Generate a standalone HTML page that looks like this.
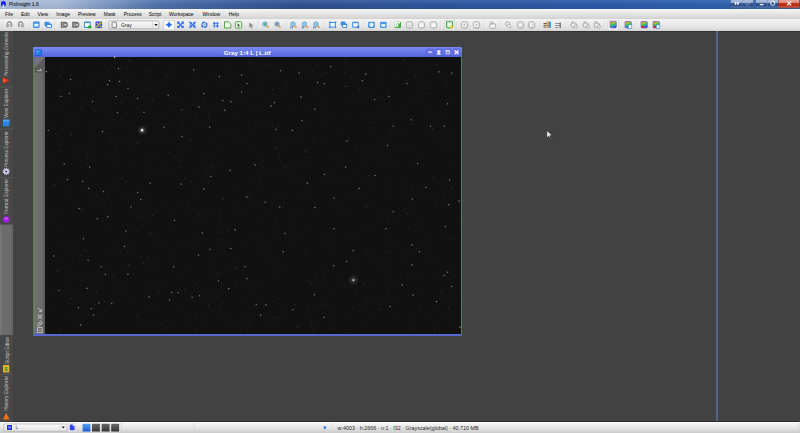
<!DOCTYPE html><html><head><meta charset="utf-8"><title>PixInsight 1.6</title><style>
*{margin:0;padding:0;box-sizing:border-box}
html,body{width:800px;height:433px;overflow:hidden;background:#424242;font-family:"Liberation Sans",sans-serif}
.a{position:absolute}
svg{position:absolute;left:0;top:0;overflow:visible}
.tx{position:absolute;white-space:nowrap;line-height:1}
</style></head><body><div class="a" style="left:0;top:0;width:800px;height:9px;background:linear-gradient(90deg,#aabcd7 0px,#a4b7d4 60px,#7893c0 110px,#4e6fa8 160px,#3b5d9c 230px,#304f8f 300px,#2f5396 360px,#2c559e 450px,#2b58a6 600px,#2e60ab 720px,#3366b0 800px)"></div><div class="a" style="left:0;top:0;width:800px;height:9px;background:linear-gradient(rgba(255,255,255,0.10),rgba(255,255,255,0) 50%,rgba(0,0,0,0.05))"></div><div class="a" style="left:0;top:9px;width:800px;height:10px;background:linear-gradient(#f6f6f6,#e6e6e6 45%,#d6d6d6 90%,#cdcdcd)"></div><div class="a" style="left:0;top:19px;width:800px;height:12px;background:linear-gradient(#f4f4f4,#ebebeb 40%,#dfdfdf 80%,#d2d2d2)"></div><div class="a" style="left:0;top:31px;width:800px;height:390px;background:#424242"></div><div class="a" style="left:0;top:31px;width:800px;height:1px;background:#333"></div><div class="a" style="left:0;top:31px;width:13px;height:390px;background:#474747"></div><div class="a" style="left:0;top:225px;width:13px;height:110px;background:#6b6b6b"></div><div class="a" style="left:0;top:225px;width:2px;height:110px;background:#767676"></div><div class="a" style="left:11px;top:225px;width:2px;height:110px;background:#666"></div><div class="a" style="left:716px;top:31px;width:2px;height:390px;background:#56648a"></div><div class="a" style="left:0;top:421px;width:800px;height:1px;background:#2e2e2e"></div><div class="a" style="left:0;top:422px;width:800px;height:11px;background:linear-gradient(#fcfcfc,#f0f0f0 25%,#e2e2e2 60%,#cacaca)"></div><div class="tx" style="left:9px;top:2.6px;font-size:4.95px;color:#1a1e26;-webkit-text-stroke:0.1px #1a1e26">PixInsight 1.6</div><div class="tx" style="left:5px;top:12.9px;font-size:4.95px;color:#000000;">File</div><div class="tx" style="left:21px;top:12.9px;font-size:4.95px;color:#000000;">Edit</div><div class="tx" style="left:37.5px;top:12.9px;font-size:4.95px;color:#000000;">View</div><div class="tx" style="left:56.3px;top:12.9px;font-size:4.95px;color:#000000;">Image</div><div class="tx" style="left:78px;top:12.9px;font-size:4.95px;color:#000000;">Preview</div><div class="tx" style="left:103.8px;top:12.9px;font-size:4.95px;color:#000000;">Mask</div><div class="tx" style="left:123.8px;top:12.9px;font-size:4.95px;color:#000000;">Process</div><div class="tx" style="left:148.8px;top:12.9px;font-size:4.95px;color:#000000;">Script</div><div class="tx" style="left:169px;top:12.9px;font-size:4.95px;color:#000000;">Workspace</div><div class="tx" style="left:202.5px;top:12.9px;font-size:4.95px;color:#000000;">Window</div><div class="tx" style="left:228.8px;top:12.9px;font-size:4.95px;color:#000000;">Help</div><div class="tx" style="left:5.3px;top:75.7px;font-size:4.95px;color:#c0c0c0;transform-origin:0 0;transform:rotate(-90deg)">Processing Console</div><div class="tx" style="left:5.3px;top:117.8px;font-size:4.75px;color:#c0c0c0;transform-origin:0 0;transform:rotate(-90deg)">View Explorer</div><div class="tx" style="left:5.3px;top:166.5px;font-size:4.72px;color:#c0c0c0;transform-origin:0 0;transform:rotate(-90deg)">Process Explorer</div><div class="tx" style="left:5.3px;top:214px;font-size:4.92px;color:#c0c0c0;transform-origin:0 0;transform:rotate(-90deg)">Format Explorer</div><div class="tx" style="left:5.3px;top:364px;font-size:5.0px;color:#c0c0c0;transform-origin:0 0;transform:rotate(-90deg)">Script Editor</div><div class="tx" style="left:5.3px;top:411px;font-size:4.95px;color:#c0c0c0;transform-origin:0 0;transform:rotate(-90deg)">History Explorer</div><svg width="800" height="433" viewBox="0 0 800 433"><defs>
<linearGradient id="gb" x1="0" y1="0" x2="0" y2="1"><stop offset="0" stop-color="#b4c4e0"/><stop offset="0.38" stop-color="#94aad2"/><stop offset="0.48" stop-color="#3a5894"/><stop offset="0.7" stop-color="#2a4a8a"/><stop offset="1" stop-color="#6080b8"/></linearGradient>
<linearGradient id="gr" x1="0" y1="0" x2="0" y2="1"><stop offset="0" stop-color="#eaa8a0"/><stop offset="0.38" stop-color="#e08878"/><stop offset="0.48" stop-color="#c03818"/><stop offset="0.7" stop-color="#b82810"/><stop offset="1" stop-color="#e07060"/></linearGradient>
<linearGradient id="gcombo" x1="0" y1="0" x2="0" y2="1"><stop offset="0" stop-color="#fafafa"/><stop offset="1" stop-color="#e4e4e4"/></linearGradient>
<linearGradient id="grgb" x1="0.1" y1="0" x2="0.5" y2="1"><stop offset="0" stop-color="#e8403a"/><stop offset="0.3" stop-color="#a8d030"/><stop offset="0.55" stop-color="#30c850"/><stop offset="0.8" stop-color="#2a90d0"/><stop offset="1" stop-color="#2a30e0"/></linearGradient>
</defs><circle cx="3.4" cy="3.3" r="2.4" fill="#1a1ef0"/><path d="M1 3.5 Q0.9 6.2 2.4 6.6 L4.4 6.6 Q5.9 6.2 5.8 3.5 Z" fill="#1a1ef0"/><path d="M2.6 4.6 L4.2 4.6 L4.3 7.9 L2.5 7.9 Z" fill="#dfe6ff"/><rect x="730.5" y="-0.5" width="23" height="8.3" rx="1" fill="url(#gb)" stroke="#3a5a92" stroke-width="0.6"/><line x1="742" y1="0" x2="742" y2="7" stroke="#6d89b8" stroke-width="0.5"/><rect x="755.5" y="-0.5" width="44" height="8.3" rx="1" fill="url(#gb)" stroke="#3a5a92" stroke-width="0.6"/><line x1="767.2" y1="0" x2="767.2" y2="7" stroke="#6d89b8" stroke-width="0.5"/><rect x="778.5" y="-0.5" width="21" height="8.3" rx="1" fill="url(#gr)" stroke="#7a3a38" stroke-width="0.6"/><ellipse cx="735.6" cy="3.3" rx="0.9" ry="1.6" fill="#f4f4f4"/><ellipse cx="738.1" cy="3.3" rx="0.9" ry="1.6" fill="#f4f4f4"/><circle cx="747.6" cy="3.2" r="1.8" fill="none" stroke="#b8bcc8" stroke-width="1" stroke-dasharray="1 0.5"/><rect x="759.8" y="4.0" width="3.6" height="1.2" fill="#fff"/><rect x="770.8" y="1.3" width="3.8" height="3.8" rx="0.6" fill="none" stroke="#f0f0f0" stroke-width="0.9"/><path d="M771.9 2.6 h1.6 l-0.8 1 Z" fill="#333"/><path d="M787.2 1.4 L791.2 5.2 M791.2 1.4 L787.2 5.2" stroke="#f4f0f0" stroke-width="1.3"/><line x1="2" y1="21" x2="2" y2="29" stroke="#cfcfcf" stroke-width="0.6"/><path d="M7.2 27.1 V24.1 Q7.4 21.9 9.4 21.9 Q11.6 22.1 11.6 24.3 V26.7" fill="none" stroke="#8e8e8e" stroke-width="1.1"/><path d="M6 25.1 L7.2 27.3 L8.6 25.3" fill="none" stroke="#9a9a9a" stroke-width="0.8"/><rect x="8.4" y="24.3" width="2" height="2.4" fill="none" stroke="#b0b0b0" stroke-width="0.7"/><path d="M18.5 26.7 V24.3 Q18.5 21.9 20.7 21.9 Q22.9 22.1 22.9 24.1 V27.1" fill="none" stroke="#8e8e8e" stroke-width="1.1"/><path d="M21.5 25.3 L22.9 27.3 L24.1 25.1" fill="none" stroke="#9a9a9a" stroke-width="0.8"/><rect x="19.7" y="24.3" width="2" height="2.4" fill="none" stroke="#b0b0b0" stroke-width="0.7"/><line x1="30" y1="20.5" x2="30" y2="29.5" stroke="#d2d2d2" stroke-width="0.7"/><line x1="30.7" y1="20.5" x2="30.7" y2="29.5" stroke="#fafafa" stroke-width="0.5"/><rect x="33" y="21.5" width="6.6" height="6.4" rx="1" fill="#3f8fe6"/><rect x="34.2" y="23.7" width="4.2" height="2.8" fill="#e8f2ff"/><rect x="44.5" y="21.7" width="5" height="4.5" rx="1.2" fill="#3c8ee8"/><rect x="46" y="23.5" width="6" height="4.6" rx="1" fill="#3c8ee8"/><rect x="47.2" y="25.1" width="3.8" height="2" fill="#fff"/><line x1="55" y1="20.5" x2="55" y2="29.5" stroke="#d2d2d2" stroke-width="0.7"/><line x1="55.7" y1="20.5" x2="55.7" y2="29.5" stroke="#fafafa" stroke-width="0.5"/><path d="M60.8 21.8 H64.8 Q67.89999999999999 21.8 67.89999999999999 24.8 Q67.89999999999999 27.8 64.8 27.8 H60.8 Z" fill="#686868"/><rect x="62.099999999999994" y="22.8" width="1.3" height="4" fill="#a8a8a8"/><circle cx="65.39999999999999" cy="24.8" r="1.3" fill="#cfcfcf"/><path d="M72.2 21.8 H76.2 Q79.3 21.8 79.3 24.8 Q79.3 27.8 76.2 27.8 H72.2 Z" fill="#686868"/><rect x="73.5" y="22.8" width="1.3" height="4" fill="#a8a8a8"/><circle cx="76.8" cy="24.8" r="1.3" fill="#cfcfcf"/><rect x="84" y="21.5" width="6.8" height="6.4" rx="1" fill="#3a8de6"/><rect x="85" y="23.1" width="4.8" height="3.8" fill="#fff"/><circle cx="89.8" cy="26.9" r="1.7" fill="#23a82a"/><rect x="95.5" y="21.5" width="6.6" height="6.6" fill="#2450d8"/><path d="M96.3 27.3 L101.3 22.3" stroke="#f0c020" stroke-width="1.4"/><circle cx="97.4" cy="23.3" r="0.9" fill="#f0c020"/><rect x="99.8" y="25.7" width="1.6" height="1.6" fill="#f0c020"/><line x1="106" y1="20.5" x2="106" y2="29.5" stroke="#d2d2d2" stroke-width="0.7"/><line x1="106.7" y1="20.5" x2="106.7" y2="29.5" stroke="#fafafa" stroke-width="0.5"/><rect x="108.9" y="20.9" width="50" height="8" rx="0.8" fill="url(#gcombo)" stroke="#a3a3a3" stroke-width="0.7"/><line x1="152.5" y1="21.5" x2="152.5" y2="28.5" stroke="#c8c8c8" stroke-width="0.6"/><path d="M154.3 23.9 h3.4 l-1.7 2.2 Z" fill="#111"/><rect x="112" y="22.2" width="4.6" height="5.4" rx="0.6" fill="none" stroke="#7a7a7a" stroke-width="0.9"/><rect x="163.8" y="20.3" width="10.399999999999977" height="9.6" fill="#fdfdfd" stroke="#c4c4c4" stroke-width="0.6"/><path d="M169 21.6 Q169.9 23.9 172.4 24.8 Q169.9 25.7 169 28.0 Q168.1 25.7 165.6 24.8 Q168.1 23.9 169 21.6 Z" fill="#2a70e8"/><circle cx="169" cy="24.8" r="1.5" fill="#2a70e8"/><path d="M177.2 21.5 h2.8 l-0.9 0.9 l1.3 1.3 l-1 1 l-1.3 -1.3 l-0.9 0.9 Z" fill="#2a6cf0"/><path d="M183.79999999999998 21.5 h-2.8 l0.9 0.9 l-1.3 1.3 l1 1 l1.3 -1.3 l0.9 0.9 Z" fill="#2a6cf0"/><path d="M177.2 28.1 h2.8 l-0.9 -0.9 l1.3 -1.3 l-1 -1 l-1.3 1.3 l-0.9 -0.9 Z" fill="#2a6cf0"/><path d="M183.79999999999998 28.1 h-2.8 l0.9 -0.9 l-1.3 -1.3 l1 -1 l1.3 1.3 l0.9 -0.9 Z" fill="#2a6cf0"/><circle cx="180.5" cy="24.8" r="0.9" fill="#1a50c8"/><path d="M192.1 24.4 v-2.6 l-0.9 0.9 l-1.4 -1.4 l-0.9 0.9 l1.4 1.4 l-0.9 0.9 Z" fill="#2a6cf0"/><path d="M192.89999999999998 24.4 v-2.6 l0.9 0.9 l1.4 -1.4 l0.9 0.9 l-1.4 1.4 l0.9 0.9 Z" fill="#2a6cf0"/><path d="M192.1 25.2 v2.6 l-0.9 -0.9 l-1.4 1.4 l-0.9 -0.9 l1.4 -1.4 l-0.9 -0.9 Z" fill="#2a6cf0"/><path d="M192.89999999999998 25.2 v2.6 l0.9 -0.9 l1.4 1.4 l0.9 -0.9 l-1.4 -1.4 l0.9 -0.9 Z" fill="#2a6cf0"/><circle cx="192.5" cy="24.8" r="0.8" fill="#1a50c8"/><circle cx="204.4" cy="24.8" r="2.5" fill="#dfe8f8" stroke="#2a6cf0" stroke-width="1.5" stroke-dasharray="3.1 0.8" transform="rotate(22 204.4 24.8)"/><circle cx="204.4" cy="24.8" r="1" fill="#9aaccc"/><path d="M212.79999999999998 24.1 l1.6 -2.5 l1.6 2.5 h-1 v1.2 h-1.2 v-1.2 Z M215.79999999999998 25.5 l1.6 2.5 l1.6 -2.5 h-1 v-1.2 h-1.2 v1.2 Z" fill="#2a6cf0"/><path d="M212.79999999999998 25.5 l1.6 2.5 l1.6 -2.5 Z M215.79999999999998 24.1 l1.6 -2.5 l1.6 2.5 Z" fill="#2a6cf0" opacity="0.85"/><path d="M224.5 21.8 h4 l2.3 2.3 v3.9 h-6.3 Z" fill="#f4fff0" stroke="#4aa83a" stroke-width="1"/><rect x="235.3" y="21.7" width="6.4" height="6.4" rx="1" fill="#f0fff0" stroke="#4aa83a" stroke-width="1"/><path d="M237.5 22.9 L240.3 25.5 L238.8 25.8 L239.5 27.1 L238.7 27.4 L238 26.1 L237.5 27.0 Z" fill="#5a5a5a"/><path d="M249.3 22.5 L253.6 25.7 L251.5 26.0 L252.4 27.9 L251.2 28.3 L250.3 26.4 L249.3 27.8 Z" fill="#8a8a8a"/><line x1="258" y1="20.5" x2="258" y2="29.5" stroke="#d2d2d2" stroke-width="0.7"/><line x1="258.7" y1="20.5" x2="258.7" y2="29.5" stroke="#fafafa" stroke-width="0.5"/><circle cx="265" cy="24.1" r="2.3" fill="#8cc8ec" stroke="#5b8fb8" stroke-width="0.6"/><line x1="266.5" y1="25.7" x2="268.5" y2="27.7" stroke="#e8923a" stroke-width="1.4"/><circle cx="265" cy="24.1" r="0.9" fill="#2aa830"/><circle cx="277" cy="24.1" r="2.3" fill="#8cc8ec" stroke="#5b8fb8" stroke-width="0.6"/><line x1="278.5" y1="25.7" x2="280.5" y2="27.7" stroke="#e8923a" stroke-width="1.4"/><circle cx="277" cy="24.1" r="0.9" fill="#d03030"/><line x1="287" y1="20.5" x2="287" y2="29.5" stroke="#d2d2d2" stroke-width="0.7"/><line x1="287.7" y1="20.5" x2="287.7" y2="29.5" stroke="#fafafa" stroke-width="0.5"/><circle cx="293" cy="24.1" r="2.3" fill="#8cc8ec" stroke="#5b8fb8" stroke-width="0.6"/><line x1="294.5" y1="25.7" x2="296.5" y2="27.7" stroke="#e8923a" stroke-width="1.4"/><rect x="290.3" y="26.5" width="0.9" height="1.8" fill="#3060c0"/><rect x="291.8" y="26.5" width="0.9" height="1.8" fill="#3060c0"/><circle cx="304.5" cy="24.1" r="2.3" fill="#8cc8ec" stroke="#5b8fb8" stroke-width="0.6"/><line x1="306.0" y1="25.7" x2="308.0" y2="27.7" stroke="#e8923a" stroke-width="1.4"/><rect x="301.8" y="26.5" width="0.9" height="1.8" fill="#3060c0"/><rect x="303.3" y="26.5" width="0.9" height="1.8" fill="#3060c0"/><circle cx="316" cy="24.1" r="2.3" fill="#8cc8ec" stroke="#5b8fb8" stroke-width="0.6"/><line x1="317.5" y1="25.7" x2="319.5" y2="27.7" stroke="#e8923a" stroke-width="1.4"/><rect x="313.3" y="26.5" width="0.9" height="1.8" fill="#3060c0"/><rect x="314.8" y="26.5" width="0.9" height="1.8" fill="#3060c0"/><line x1="325" y1="20.5" x2="325" y2="29.5" stroke="#d2d2d2" stroke-width="0.7"/><line x1="325.7" y1="20.5" x2="325.7" y2="29.5" stroke="#fafafa" stroke-width="0.5"/><rect x="329.8" y="22.5" width="5.6" height="4.6" fill="#f0f6ff" stroke="#3a8de6" stroke-width="1"/><path d="M329 21.5 h1.6 v1 h-0.6 v0.6 h-1 Z M336.2 21.5 h-1.6 v1 h0.6 v0.6 h1 Z M329 28.1 h1.6 v-1 h-0.6 v-0.6 h-1 Z M336.2 28.1 h-1.6 v-1 h0.6 v-0.6 h1 Z" fill="#3a8de6"/><rect x="340.7" y="21.5" width="4.8" height="4.3" rx="1.3" fill="#3c8ee8"/><rect x="342" y="23.5" width="5.2" height="4.4" rx="1" fill="#3c8ee8"/><rect x="343" y="25.0" width="3.2" height="2" fill="#fff"/><rect x="352.2" y="21.7" width="6.6" height="6" rx="1" fill="#3a8de6"/><rect x="353.2" y="23.1" width="4.6" height="3.6" fill="#eef4ff"/><rect x="357.2" y="26.1" width="2" height="2" fill="#1f6fe0"/><line x1="364" y1="20.5" x2="364" y2="29.5" stroke="#d2d2d2" stroke-width="0.7"/><line x1="364.7" y1="20.5" x2="364.7" y2="29.5" stroke="#fafafa" stroke-width="0.5"/><rect x="368.2" y="21.7" width="6.6" height="6.2" rx="1.4" fill="#3c8ee8"/><circle cx="371.5" cy="24.8" r="2.2" fill="#e8eefa"/><rect x="380" y="21.7" width="6.6" height="6.2" rx="1" fill="#4595ea"/><rect x="381.3" y="24.1" width="4" height="2.6" fill="#f2f6ff"/><line x1="391" y1="20.5" x2="391" y2="29.5" stroke="#d2d2d2" stroke-width="0.7"/><line x1="391.7" y1="20.5" x2="391.7" y2="29.5" stroke="#fafafa" stroke-width="0.5"/><rect x="394.6" y="21.7" width="6.4" height="6.4" rx="1" fill="#38b038"/><path d="M395.6 27.1 V22.7 H400" stroke="#fff" stroke-width="1.6" fill="none"/><rect x="396.8" y="23.9" width="1.5" height="3" fill="#fff"/><rect x="406.9" y="22.4" width="6" height="6" rx="1.6" fill="none" stroke="#c4c4c4" stroke-width="0.8"/><rect x="406.4" y="21.8" width="6" height="6" rx="1.6" fill="#eeeeee" stroke="#a4a4a4" stroke-width="0.8"/><path d="M407.8 25.9 h1.6 l1.4 -1.6" stroke="#b0b0b0" stroke-width="0.6" fill="none"/><rect x="418.9" y="22.4" width="6" height="6" rx="1.6" fill="none" stroke="#c4c4c4" stroke-width="0.8"/><rect x="418.4" y="21.8" width="6" height="6" rx="1.6" fill="#eeeeee" stroke="#a4a4a4" stroke-width="0.8"/><rect x="419.6" y="24.5" width="3.8" height="2.2" fill="#ffffff"/><rect x="430.9" y="22.4" width="6" height="6" rx="1.6" fill="none" stroke="#c4c4c4" stroke-width="0.8"/><rect x="430.4" y="21.8" width="6" height="6" rx="1.6" fill="#eeeeee" stroke="#a4a4a4" stroke-width="0.8"/><rect x="431.6" y="24.5" width="3.8" height="2.2" fill="#ffffff"/><line x1="441" y1="20.5" x2="441" y2="29.5" stroke="#d2d2d2" stroke-width="0.7"/><line x1="441.7" y1="20.5" x2="441.7" y2="29.5" stroke="#fafafa" stroke-width="0.5"/><rect x="445" y="20.3" width="9.199999999999989" height="9.6" fill="#fdfdfd" stroke="#c4c4c4" stroke-width="0.6"/><rect x="446.6" y="21.7" width="6" height="6.2" rx="0.6" fill="#eaf7e8" stroke="#3aa83a" stroke-width="1.1"/><circle cx="451.2" cy="26.7" r="1.5" fill="#f0d020"/><line x1="457" y1="20.5" x2="457" y2="29.5" stroke="#d2d2d2" stroke-width="0.7"/><line x1="457.7" y1="20.5" x2="457.7" y2="29.5" stroke="#fafafa" stroke-width="0.5"/><rect x="461.9" y="22.4" width="6" height="6" rx="1.6" fill="none" stroke="#c4c4c4" stroke-width="0.8"/><rect x="461.4" y="21.8" width="6" height="6" rx="1.6" fill="#eeeeee" stroke="#a4a4a4" stroke-width="0.8"/><path d="M463.2 24.8 l1.6 -1.2 v2.4 Z" fill="#a8a8a8"/><rect x="473.9" y="22.4" width="6" height="6" rx="1.6" fill="none" stroke="#c4c4c4" stroke-width="0.8"/><rect x="473.4" y="21.8" width="6" height="6" rx="1.6" fill="#eeeeee" stroke="#a4a4a4" stroke-width="0.8"/><path d="M477.6 24.8 l-1.6 -1.2 v2.4 Z" fill="#a8a8a8"/><line x1="485" y1="20.5" x2="485" y2="29.5" stroke="#d2d2d2" stroke-width="0.7"/><line x1="485.7" y1="20.5" x2="485.7" y2="29.5" stroke="#fafafa" stroke-width="0.5"/><rect x="489.8" y="23.7" width="5.8" height="4.6" rx="1.6" fill="#f4f4f4" stroke="#a3a3a3" stroke-width="0.9"/><circle cx="491.5" cy="23.0" r="1.4" fill="none" stroke="#a8a8a8" stroke-width="0.8"/><line x1="500" y1="20.5" x2="500" y2="29.5" stroke="#d2d2d2" stroke-width="0.7"/><line x1="500.7" y1="20.5" x2="500.7" y2="29.5" stroke="#fafafa" stroke-width="0.5"/><circle cx="507.6" cy="23.8" r="2.1" fill="#e8e8e8" stroke="#a8a8a8" stroke-width="0.9"/><path d="M508.8 25.1 l2.2 2.8" stroke="#a0a0a0" stroke-width="1.5"/><rect x="508" y="24.7" width="2.8" height="2.4" fill="#f6f6f6" stroke="#b0b0b0" stroke-width="0.5"/><rect x="517.9" y="22.4" width="6" height="6" rx="1.6" fill="none" stroke="#c4c4c4" stroke-width="0.8"/><rect x="517.4" y="21.8" width="6" height="6" rx="1.6" fill="#eeeeee" stroke="#a4a4a4" stroke-width="0.8"/><circle cx="520.4" cy="24.8" r="1.6" fill="#fff" stroke="#c0c0c0" stroke-width="0.5"/><rect x="528.9" y="22.4" width="6" height="6" rx="1.6" fill="none" stroke="#c4c4c4" stroke-width="0.8"/><rect x="528.4" y="21.8" width="6" height="6" rx="1.6" fill="#eeeeee" stroke="#a4a4a4" stroke-width="0.8"/><rect x="529.6" y="24.1" width="2.8" height="2.6" fill="#fff" stroke="#b8b8b8" stroke-width="0.5"/><line x1="540" y1="20.5" x2="540" y2="29.5" stroke="#d2d2d2" stroke-width="0.7"/><line x1="540.7" y1="20.5" x2="540.7" y2="29.5" stroke="#fafafa" stroke-width="0.5"/><rect x="546.5" y="21.5" width="2.4" height="6.6" fill="#f39a30"/><rect x="548.6" y="21.5" width="2.4" height="6.6" rx="1" fill="#3a9ae8"/><path d="M543.5 23.5 h3 M543.5 25.3 h3 M543.5 27.1 h2.5" stroke="#222" stroke-width="0.7"/><path d="M555.2 23.5 h5.5 M555.2 25.5 h5.5 M555.2 27.5 h3" stroke="#8a8a8a" stroke-width="0.9"/><rect x="559.5" y="22.5" width="1.4" height="5.6" fill="#777"/><line x1="566" y1="20.5" x2="566" y2="29.5" stroke="#d2d2d2" stroke-width="0.7"/><line x1="566.7" y1="20.5" x2="566.7" y2="29.5" stroke="#fafafa" stroke-width="0.5"/><rect x="571.2" y="23.1" width="5" height="4" rx="0.8" fill="#f0f0f0" stroke="#a0a0a0" stroke-width="0.9"/><circle cx="575.8" cy="26.5" r="1.6" fill="#f3f3f3" stroke="#9a9a9a" stroke-width="0.8"/><rect x="571.8" y="21.5" width="2" height="1" fill="#9a9a9a"/><rect x="583.2" y="23.1" width="5" height="4" rx="0.8" fill="#f0f0f0" stroke="#a0a0a0" stroke-width="0.9"/><circle cx="587.8" cy="26.5" r="1.6" fill="#f3f3f3" stroke="#9a9a9a" stroke-width="0.8"/><rect x="583.8" y="21.5" width="2" height="1" fill="#9a9a9a"/><rect x="594.2" y="23.1" width="5" height="4" rx="0.8" fill="#f0f0f0" stroke="#a0a0a0" stroke-width="0.9"/><circle cx="598.8" cy="26.5" r="1.6" fill="#f3f3f3" stroke="#9a9a9a" stroke-width="0.8"/><rect x="594.8" y="21.5" width="2" height="1" fill="#9a9a9a"/><line x1="605" y1="20.5" x2="605" y2="29.5" stroke="#d2d2d2" stroke-width="0.7"/><line x1="605.7" y1="20.5" x2="605.7" y2="29.5" stroke="#fafafa" stroke-width="0.5"/><rect x="608" y="20.3" width="10.200000000000045" height="9.6" fill="#fdfdfd" stroke="#c4c4c4" stroke-width="0.6"/><rect x="610" y="21.5" width="6.4" height="6.4" rx="0.8" fill="url(#grgb)" stroke="#8a5ac8" stroke-width="0.7"/><rect x="625" y="21.5" width="6.4" height="6.4" rx="0.8" fill="url(#grgb)" stroke="#8a5ac8" stroke-width="0.7"/><rect x="628.4" y="24.9" width="3.4" height="3.4" fill="#fff" stroke="#3a8ae0" stroke-width="0.6"/><line x1="636" y1="20.5" x2="636" y2="29.5" stroke="#d2d2d2" stroke-width="0.7"/><line x1="636.7" y1="20.5" x2="636.7" y2="29.5" stroke="#fafafa" stroke-width="0.5"/><rect x="641" y="21.5" width="6.4" height="6.4" rx="0.8" fill="url(#grgb)" stroke="#8a5ac8" stroke-width="0.7"/><path d="M641 28.1 l1.8 -3 l1.8 3 Z" fill="#e02020"/><rect x="653" y="21.5" width="6.4" height="6.4" rx="0.8" fill="url(#grgb)" stroke="#8a5ac8" stroke-width="0.7"/><path d="M653 28.1 l1.8 -3 l1.8 3 Z" fill="#e02020"/><rect x="656.4" y="24.9" width="3.4" height="3.4" fill="#fff" stroke="#3a8ae0" stroke-width="0.6"/><line x1="0" y1="86.8" x2="13" y2="86.8" stroke="#5c5c5c" stroke-width="0.8"/><line x1="0" y1="129" x2="13" y2="129" stroke="#5c5c5c" stroke-width="0.8"/><line x1="0" y1="177.6" x2="13" y2="177.6" stroke="#5c5c5c" stroke-width="0.8"/><line x1="0" y1="224.6" x2="13" y2="224.6" stroke="#5c5c5c" stroke-width="0.8"/><line x1="0" y1="374.3" x2="13" y2="374.3" stroke="#5c5c5c" stroke-width="0.8"/><line x1="0" y1="421" x2="13" y2="421" stroke="#5c5c5c" stroke-width="0.8"/><path d="M2.9 76.9 L9.6 80.4 L3.1 83.8 Z" fill="#e8300f"/><path d="M3.2 78.5 L5.5 80.4 L3.3 82.3 Z" fill="#f89060" opacity="0.7"/><rect x="3" y="119.6" width="6.4" height="6.6" fill="#2a86e8"/><rect x="3" y="119.6" width="6.4" height="2" fill="#6ab4f4" opacity="0.6"/><circle cx="6.2" cy="171.4" r="2.6" fill="#d6d2f2"/><circle cx="6.2" cy="171.4" r="3.0" fill="none" stroke="#d6d2f2" stroke-width="1.2" stroke-dasharray="1 0.9"/><circle cx="6.2" cy="171.4" r="1" fill="#3a3850"/><circle cx="6.3" cy="219.6" r="3.3" fill="#a020e0"/><ellipse cx="6.3" cy="218.5" rx="2" ry="1.1" fill="#d080ff" opacity="0.7"/><rect x="3" y="365" width="6.3" height="7.4" rx="0.5" fill="#e8b030"/><text x="4.3" y="371.2" font-size="6" font-family="Liberation Sans" font-weight="bold" fill="#1a9a2a">$</text><path d="M6.2 413 L9.6 419.4 L2.8 419.4 Z" fill="#f07010"/></svg><div class="a" style="left:32.5px;top:47px;width:429.8px;height:288.6px;background:#5866d2;border-radius:1.5px 1.5px 0 0"></div><div class="a" style="left:32.5px;top:46.9px;width:429.8px;height:10.3px;background:linear-gradient(#7a8af2,#6878e8 50%,#5464da);border-radius:1.5px 1.5px 0 0"></div><div class="a" style="left:34.2px;top:57.2px;width:10.4px;height:277px;background:linear-gradient(90deg,#777 0,#6e6e6e 2px,#6a6a6a 8px,#5c5c5c 10.4px)"></div><div class="a" style="left:44.5px;top:57.2px;width:416px;height:277px;background:#111111"></div><div class="tx" style="left:223.8px;top:50.2px;font-size:6.2px;color:#ffffff;font-weight:bold">Gray 1:4 L | L.tif</div><svg width="800" height="433" viewBox="0 0 800 433"><defs>
<radialGradient id="gs"><stop offset="0" stop-color="#8a8a8a"/><stop offset="0.45" stop-color="#5a5a5a" stop-opacity="0.8"/><stop offset="1" stop-color="#303030" stop-opacity="0"/></radialGradient>
<radialGradient id="gstar"><stop offset="0" stop-color="#ffffff"/><stop offset="0.13" stop-color="#e8e8e8"/><stop offset="0.28" stop-color="#707070" stop-opacity="0.7"/><stop offset="0.6" stop-color="#404040" stop-opacity="0.3"/><stop offset="1" stop-color="#303030" stop-opacity="0"/></radialGradient>
<radialGradient id="gstar2"><stop offset="0" stop-color="#e8e8e8"/><stop offset="0.1" stop-color="#a8a8a8"/><stop offset="0.25" stop-color="#505050" stop-opacity="0.6"/><stop offset="0.6" stop-color="#3a3a3a" stop-opacity="0.3"/><stop offset="1" stop-color="#303030" stop-opacity="0"/></radialGradient>
<linearGradient id="gsb" x1="0" y1="0" x2="0" y2="1"><stop offset="0" stop-color="#5aa0f0"/><stop offset="1" stop-color="#1f5ad0"/></linearGradient>
<linearGradient id="gsg" x1="0" y1="0" x2="0" y2="1"><stop offset="0" stop-color="#6a6a6a"/><stop offset="1" stop-color="#353535"/></linearGradient>
</defs><rect x="35.6" y="49.6" width="5.9" height="5.9" rx="0.6" fill="#1e7ae8" stroke="#1a3a9a" stroke-width="0.4"/><path d="M36.2 50.2 h4.6 l-4.6 4.6 Z" fill="#5ab0ff" opacity="0.6"/><rect x="34.5" y="57.2" width="10" height="15.5" fill="#5a5a5a"/><path d="M34.5 57.2 h10 L34.5 68.3 Z" fill="#767676"/><path d="M37.2 70.6 h4.4 M40.8 68.8 v1.8" stroke="#d0d0d0" stroke-width="0.8"/><rect x="426.6" y="48.9" width="6.8" height="6.5" rx="0.8" fill="#6974e6" stroke="#4d58c8" stroke-width="0.5"/><rect x="435.3" y="48.9" width="6.8" height="6.5" rx="0.8" fill="#6974e6" stroke="#4d58c8" stroke-width="0.5"/><rect x="444.2" y="48.9" width="6.8" height="6.5" rx="0.8" fill="#6974e6" stroke="#4d58c8" stroke-width="0.5"/><rect x="453" y="48.9" width="6.8" height="6.5" rx="0.8" fill="#6974e6" stroke="#4d58c8" stroke-width="0.5"/><rect x="428.3" y="51.6" width="3.6" height="1" fill="#fff"/><path d="M437 50.6 h3.6 v0.8 l-1.4 1.2 l1.4 1.2 v0.8 h-3.6 v-0.8 l1.4 -1.2 l-1.4 -1.2 Z" fill="#fff"/><rect x="446" y="50.6" width="3.4" height="3.2" fill="none" stroke="#dfe2ff" stroke-width="0.7"/><rect x="446" y="50.6" width="3.4" height="0.9" fill="#fff"/><path d="M454.7 50.5 L458.6 54.2 M458.6 50.5 L454.7 54.2" stroke="#fff" stroke-width="1.1"/><path d="M37.8 307.8 l3.4 3.4 M41.6 309 v2.6 h-2.6" stroke="#c8c8c8" stroke-width="0.8" fill="none"/><path d="M37.8 314.6 l4.2 4.2 M42 314.6 l-4.2 4.2" stroke="#c8c8c8" stroke-width="0.9"/><rect x="38.4" y="315.2" width="3" height="3" fill="none" stroke="#b0b0b0" stroke-width="0.5"/><circle cx="39" cy="324.5" r="1.4" fill="none" stroke="#c8c8c8" stroke-width="0.7"/><circle cx="41" cy="322.6" r="1.4" fill="none" stroke="#c8c8c8" stroke-width="0.7"/><rect x="37.6" y="327.6" width="4.6" height="5" fill="none" stroke="#c8c8c8" stroke-width="0.8"/><line x1="37.6" y1="330" x2="42.2" y2="330" stroke="#c8c8c8" stroke-width="0.6"/><rect x="179.4" y="99.5" width="1" height="1" fill="#262626"/><rect x="75.1" y="205.4" width="1" height="1" fill="#262626"/><rect x="69.1" y="197.5" width="1" height="1" fill="#262626"/><rect x="225.0" y="77.2" width="1" height="1" fill="#262626"/><rect x="221.2" y="285.4" width="1" height="1" fill="#262626"/><rect x="137.6" y="230.5" width="1" height="1" fill="#363636"/><rect x="284.5" y="167.1" width="1" height="1" fill="#363636"/><rect x="64.3" y="294.1" width="1" height="1" fill="#262626"/><rect x="104.9" y="90.4" width="1" height="1" fill="#262626"/><rect x="383.7" y="107.7" width="1" height="1" fill="#262626"/><rect x="310.1" y="160.4" width="1" height="1" fill="#262626"/><rect x="71.1" y="74.4" width="1" height="1" fill="#262626"/><rect x="327.4" y="175.6" width="1" height="1" fill="#262626"/><rect x="288.0" y="182.6" width="1" height="1" fill="#262626"/><rect x="374.7" y="250.2" width="1" height="1" fill="#262626"/><rect x="283.4" y="202.4" width="1" height="1" fill="#363636"/><rect x="347.7" y="137.2" width="1" height="1" fill="#363636"/><rect x="94.0" y="173.0" width="1" height="1" fill="#262626"/><rect x="108.1" y="192.5" width="1" height="1" fill="#262626"/><rect x="322.3" y="268.3" width="1" height="1" fill="#262626"/><rect x="408.3" y="144.3" width="1" height="1" fill="#262626"/><rect x="291.7" y="217.5" width="1" height="1" fill="#262626"/><rect x="393.6" y="317.8" width="1" height="1" fill="#262626"/><rect x="320.6" y="74.7" width="1" height="1" fill="#262626"/><rect x="313.6" y="331.1" width="1" height="1" fill="#363636"/><rect x="163.1" y="164.1" width="1" height="1" fill="#262626"/><rect x="54.4" y="185.0" width="1" height="1" fill="#262626"/><rect x="93.6" y="74.2" width="1" height="1" fill="#262626"/><rect x="98.7" y="126.1" width="1" height="1" fill="#262626"/><rect x="406.6" y="80.2" width="1" height="1" fill="#262626"/><rect x="273.0" y="300.9" width="1" height="1" fill="#363636"/><rect x="403.6" y="134.6" width="1" height="1" fill="#262626"/><rect x="193.9" y="301.2" width="1" height="1" fill="#363636"/><rect x="107.6" y="106.5" width="1" height="1" fill="#262626"/><rect x="141.8" y="191.4" width="1" height="1" fill="#262626"/><rect x="154.0" y="59.1" width="1" height="1" fill="#262626"/><rect x="198.2" y="213.7" width="1" height="1" fill="#363636"/><rect x="331.6" y="199.8" width="1" height="1" fill="#262626"/><rect x="325.6" y="72.8" width="1" height="1" fill="#363636"/><rect x="368.7" y="298.5" width="1" height="1" fill="#262626"/><rect x="207.8" y="167.7" width="1" height="1" fill="#262626"/><rect x="308.2" y="75.1" width="1" height="1" fill="#262626"/><rect x="131.6" y="102.6" width="1" height="1" fill="#262626"/><rect x="66.8" y="58.1" width="1" height="1" fill="#262626"/><rect x="87.1" y="158.0" width="1" height="1" fill="#262626"/><rect x="407.8" y="226.9" width="1" height="1" fill="#262626"/><rect x="149.7" y="153.5" width="1" height="1" fill="#262626"/><rect x="96.0" y="291.5" width="1" height="1" fill="#363636"/><rect x="238.4" y="191.1" width="1" height="1" fill="#262626"/><rect x="87.4" y="152.2" width="1" height="1" fill="#262626"/><rect x="389.0" y="102.4" width="1" height="1" fill="#262626"/><rect x="439.7" y="203.3" width="1" height="1" fill="#262626"/><rect x="270.4" y="65.4" width="1" height="1" fill="#262626"/><rect x="451.1" y="295.4" width="1" height="1" fill="#262626"/><rect x="153.4" y="158.8" width="1" height="1" fill="#262626"/><rect x="365.4" y="204.5" width="1" height="1" fill="#262626"/><rect x="181.8" y="119.3" width="1" height="1" fill="#363636"/><rect x="453.7" y="292.5" width="1" height="1" fill="#363636"/><rect x="384.6" y="261.5" width="1" height="1" fill="#262626"/><rect x="259.8" y="155.8" width="1" height="1" fill="#262626"/><rect x="56.6" y="134.8" width="1" height="1" fill="#262626"/><rect x="332.4" y="321.0" width="1" height="1" fill="#262626"/><rect x="433.9" y="329.7" width="1" height="1" fill="#363636"/><rect x="196.3" y="118.6" width="1" height="1" fill="#262626"/><rect x="126.6" y="114.2" width="1" height="1" fill="#262626"/><rect x="418.6" y="289.1" width="1" height="1" fill="#262626"/><rect x="316.0" y="277.9" width="1" height="1" fill="#262626"/><rect x="319.1" y="308.2" width="1" height="1" fill="#262626"/><rect x="356.3" y="189.5" width="1" height="1" fill="#262626"/><rect x="372.5" y="149.4" width="1" height="1" fill="#363636"/><rect x="448.2" y="166.9" width="1" height="1" fill="#262626"/><rect x="437.9" y="257.3" width="1" height="1" fill="#262626"/><rect x="97.7" y="99.6" width="1" height="1" fill="#363636"/><rect x="379.7" y="98.2" width="1" height="1" fill="#363636"/><rect x="451.8" y="238.7" width="1" height="1" fill="#262626"/><rect x="272.7" y="94.0" width="1" height="1" fill="#262626"/><rect x="447.9" y="236.7" width="1" height="1" fill="#262626"/><rect x="432.5" y="177.3" width="1" height="1" fill="#363636"/><rect x="387.9" y="116.0" width="1" height="1" fill="#262626"/><rect x="166.6" y="124.1" width="1" height="1" fill="#262626"/><rect x="152.6" y="173.2" width="1" height="1" fill="#262626"/><rect x="422.7" y="155.3" width="1" height="1" fill="#262626"/><rect x="287.1" y="306.7" width="1" height="1" fill="#262626"/><rect x="425.9" y="196.0" width="1" height="1" fill="#262626"/><rect x="262.3" y="63.1" width="1" height="1" fill="#262626"/><rect x="121.0" y="59.1" width="1" height="1" fill="#262626"/><rect x="116.5" y="188.2" width="1" height="1" fill="#262626"/><rect x="275.9" y="147.6" width="1" height="1" fill="#262626"/><rect x="275.5" y="273.7" width="1" height="1" fill="#262626"/><rect x="277.5" y="126.3" width="1" height="1" fill="#262626"/><rect x="365.5" y="197.6" width="1" height="1" fill="#262626"/><rect x="360.4" y="308.9" width="1" height="1" fill="#262626"/><rect x="299.2" y="197.0" width="1" height="1" fill="#262626"/><rect x="332.5" y="182.4" width="1" height="1" fill="#262626"/><rect x="243.4" y="316.9" width="1" height="1" fill="#262626"/><rect x="408.8" y="317.1" width="1" height="1" fill="#262626"/><rect x="277.2" y="317.4" width="1" height="1" fill="#363636"/><rect x="101.9" y="91.4" width="1" height="1" fill="#262626"/><rect x="75.1" y="124.2" width="1" height="1" fill="#262626"/><rect x="322.8" y="273.6" width="1" height="1" fill="#363636"/><rect x="109.1" y="254.9" width="1" height="1" fill="#262626"/><rect x="104.3" y="300.8" width="1" height="1" fill="#363636"/><rect x="136.1" y="319.9" width="1" height="1" fill="#262626"/><rect x="247.2" y="330.2" width="1" height="1" fill="#363636"/><rect x="112.0" y="176.7" width="1" height="1" fill="#262626"/><rect x="185.7" y="111.8" width="1" height="1" fill="#262626"/><rect x="344.7" y="63.4" width="1" height="1" fill="#262626"/><rect x="227.8" y="63.0" width="1" height="1" fill="#262626"/><rect x="303.9" y="198.9" width="1" height="1" fill="#262626"/><rect x="453.8" y="274.8" width="1" height="1" fill="#363636"/><rect x="88.5" y="131.0" width="1" height="1" fill="#262626"/><rect x="368.3" y="132.4" width="1" height="1" fill="#262626"/><rect x="220.2" y="308.6" width="1" height="1" fill="#363636"/><rect x="152.3" y="99.1" width="1" height="1" fill="#363636"/><rect x="281.8" y="250.6" width="1" height="1" fill="#262626"/><rect x="68.9" y="247.3" width="1" height="1" fill="#262626"/><rect x="75.1" y="316.0" width="1" height="1" fill="#262626"/><rect x="377.7" y="81.0" width="1" height="1" fill="#363636"/><rect x="72.6" y="295.3" width="1" height="1" fill="#262626"/><rect x="185.7" y="210.1" width="1" height="1" fill="#363636"/><rect x="156.2" y="93.5" width="1" height="1" fill="#262626"/><rect x="144.0" y="88.1" width="1" height="1" fill="#262626"/><rect x="65.9" y="113.5" width="1" height="1" fill="#262626"/><rect x="171.6" y="266.9" width="1" height="1" fill="#262626"/><rect x="252.5" y="106.9" width="1" height="1" fill="#262626"/><rect x="52.5" y="126.9" width="1" height="1" fill="#262626"/><rect x="349.2" y="209.5" width="1" height="1" fill="#262626"/><rect x="242.0" y="315.0" width="1" height="1" fill="#262626"/><rect x="384.9" y="176.8" width="1" height="1" fill="#262626"/><rect x="391.4" y="166.1" width="1" height="1" fill="#262626"/><rect x="330.4" y="328.2" width="1" height="1" fill="#262626"/><rect x="390.4" y="252.3" width="1" height="1" fill="#262626"/><rect x="212.9" y="153.6" width="1" height="1" fill="#262626"/><rect x="98.9" y="77.4" width="1" height="1" fill="#262626"/><rect x="151.1" y="102.9" width="1" height="1" fill="#262626"/><rect x="394.1" y="297.4" width="1" height="1" fill="#262626"/><rect x="162.0" y="124.6" width="1" height="1" fill="#262626"/><rect x="235.7" y="101.3" width="1" height="1" fill="#262626"/><rect x="154.2" y="322.5" width="1" height="1" fill="#363636"/><rect x="272.0" y="125.2" width="1" height="1" fill="#363636"/><rect x="173.5" y="156.1" width="1" height="1" fill="#262626"/><rect x="203.4" y="188.5" width="1" height="1" fill="#262626"/><rect x="128.4" y="196.8" width="1" height="1" fill="#262626"/><rect x="154.6" y="82.7" width="1" height="1" fill="#262626"/><rect x="62.3" y="64.2" width="1" height="1" fill="#262626"/><rect x="141.6" y="219.0" width="1" height="1" fill="#262626"/><rect x="356.5" y="238.8" width="1" height="1" fill="#262626"/><rect x="409.8" y="165.1" width="1" height="1" fill="#262626"/><rect x="453.7" y="99.1" width="1" height="1" fill="#262626"/><rect x="311.9" y="70.0" width="1" height="1" fill="#363636"/><rect x="415.2" y="230.5" width="1" height="1" fill="#262626"/><rect x="382.1" y="96.3" width="1" height="1" fill="#262626"/><rect x="254.3" y="287.6" width="1" height="1" fill="#363636"/><rect x="388.0" y="218.6" width="1" height="1" fill="#363636"/><rect x="328.4" y="248.7" width="1" height="1" fill="#262626"/><rect x="57.9" y="94.6" width="1" height="1" fill="#262626"/><rect x="88.5" y="287.9" width="1" height="1" fill="#262626"/><rect x="305.5" y="230.2" width="1" height="1" fill="#262626"/><rect x="248.1" y="58.9" width="1" height="1" fill="#262626"/><rect x="355.5" y="196.3" width="1" height="1" fill="#262626"/><rect x="318.6" y="76.2" width="1" height="1" fill="#262626"/><rect x="149.7" y="78.5" width="1" height="1" fill="#262626"/><rect x="347.7" y="114.4" width="1" height="1" fill="#262626"/><rect x="449.9" y="193.8" width="1" height="1" fill="#262626"/><rect x="243.8" y="246.0" width="1" height="1" fill="#262626"/><rect x="301.0" y="234.8" width="1" height="1" fill="#262626"/><rect x="106.2" y="127.8" width="1" height="1" fill="#262626"/><rect x="171.3" y="214.1" width="1" height="1" fill="#262626"/><rect x="70.2" y="131.9" width="1" height="1" fill="#262626"/><rect x="332.3" y="243.8" width="1" height="1" fill="#262626"/><rect x="259.4" y="185.8" width="1" height="1" fill="#262626"/><rect x="94.2" y="303.8" width="1" height="1" fill="#262626"/><rect x="450.9" y="315.5" width="1" height="1" fill="#262626"/><rect x="235.5" y="283.5" width="1" height="1" fill="#363636"/><rect x="231.5" y="131.9" width="1" height="1" fill="#262626"/><rect x="437.4" y="115.9" width="1" height="1" fill="#262626"/><rect x="103.8" y="202.1" width="1" height="1" fill="#363636"/><rect x="100.0" y="283.6" width="1" height="1" fill="#262626"/><rect x="413.0" y="251.4" width="1" height="1" fill="#262626"/><rect x="417.5" y="191.7" width="1" height="1" fill="#262626"/><rect x="46.5" y="193.2" width="1" height="1" fill="#262626"/><rect x="170.3" y="96.7" width="1" height="1" fill="#262626"/><rect x="176.2" y="289.1" width="1" height="1" fill="#262626"/><rect x="356.6" y="288.8" width="1" height="1" fill="#262626"/><rect x="429.5" y="254.1" width="1" height="1" fill="#363636"/><rect x="165.3" y="160.4" width="1" height="1" fill="#262626"/><rect x="459.5" y="220.0" width="1" height="1" fill="#262626"/><rect x="222.6" y="133.7" width="1" height="1" fill="#262626"/><rect x="87.2" y="287.5" width="1" height="1" fill="#262626"/><rect x="433.3" y="126.6" width="1" height="1" fill="#262626"/><rect x="257.0" y="110.2" width="1" height="1" fill="#262626"/><rect x="441.8" y="301.2" width="1" height="1" fill="#363636"/><rect x="306.8" y="309.2" width="1" height="1" fill="#363636"/><rect x="272.9" y="255.9" width="1" height="1" fill="#262626"/><rect x="348.9" y="182.0" width="1" height="1" fill="#262626"/><rect x="312.5" y="136.7" width="1" height="1" fill="#262626"/><rect x="429.6" y="93.0" width="1" height="1" fill="#262626"/><rect x="187.6" y="139.9" width="1" height="1" fill="#262626"/><rect x="450.2" y="129.5" width="1" height="1" fill="#262626"/><rect x="169.8" y="211.3" width="1" height="1" fill="#262626"/><rect x="114.4" y="102.5" width="1" height="1" fill="#262626"/><rect x="421.0" y="194.7" width="1" height="1" fill="#262626"/><rect x="421.1" y="332.0" width="1" height="1" fill="#262626"/><rect x="102.9" y="110.9" width="1" height="1" fill="#262626"/><rect x="186.9" y="83.1" width="1" height="1" fill="#262626"/><rect x="152.2" y="214.6" width="1" height="1" fill="#363636"/><rect x="356.1" y="171.5" width="1" height="1" fill="#262626"/><rect x="262.5" y="161.6" width="1" height="1" fill="#262626"/><rect x="70.8" y="134.3" width="1" height="1" fill="#363636"/><rect x="97.2" y="196.4" width="1" height="1" fill="#262626"/><rect x="403.1" y="117.4" width="1" height="1" fill="#262626"/><rect x="148.1" y="167.9" width="1" height="1" fill="#262626"/><rect x="440.9" y="291.4" width="1" height="1" fill="#363636"/><rect x="54.1" y="66.9" width="1" height="1" fill="#262626"/><rect x="416.7" y="188.1" width="1" height="1" fill="#262626"/><rect x="45.1" y="165.7" width="1" height="1" fill="#363636"/><rect x="387.6" y="293.3" width="1" height="1" fill="#363636"/><rect x="148.1" y="88.0" width="1" height="1" fill="#262626"/><rect x="261.8" y="245.6" width="1" height="1" fill="#363636"/><rect x="344.5" y="236.0" width="1" height="1" fill="#262626"/><rect x="234.8" y="209.7" width="1" height="1" fill="#262626"/><rect x="369.7" y="122.0" width="1" height="1" fill="#363636"/><rect x="312.9" y="141.5" width="1" height="1" fill="#262626"/><rect x="149.5" y="233.0" width="1" height="1" fill="#262626"/><rect x="91.5" y="77.3" width="1" height="1" fill="#262626"/><rect x="286.9" y="164.7" width="1" height="1" fill="#262626"/><rect x="294.4" y="60.9" width="1" height="1" fill="#262626"/><rect x="236.2" y="321.7" width="1" height="1" fill="#262626"/><rect x="411.8" y="188.7" width="1" height="1" fill="#262626"/><rect x="147.5" y="322.2" width="1" height="1" fill="#262626"/><rect x="172.6" y="64.0" width="1" height="1" fill="#262626"/><rect x="324.9" y="173.5" width="1" height="1" fill="#262626"/><rect x="322.0" y="312.4" width="1" height="1" fill="#262626"/><rect x="59.2" y="151.0" width="1" height="1" fill="#262626"/><rect x="328.3" y="112.5" width="1" height="1" fill="#262626"/><rect x="351.7" y="196.8" width="1" height="1" fill="#262626"/><rect x="447.5" y="143.7" width="1" height="1" fill="#363636"/><rect x="140.8" y="118.9" width="1" height="1" fill="#262626"/><rect x="167.4" y="319.8" width="1" height="1" fill="#262626"/><rect x="122.7" y="119.4" width="1" height="1" fill="#262626"/><rect x="321.1" y="318.9" width="1" height="1" fill="#262626"/><rect x="208.3" y="116.6" width="1" height="1" fill="#363636"/><rect x="103.9" y="72.3" width="1" height="1" fill="#262626"/><rect x="208.2" y="305.0" width="1" height="1" fill="#363636"/><rect x="349.1" y="332.3" width="1" height="1" fill="#363636"/><rect x="181.6" y="109.0" width="1" height="1" fill="#363636"/><rect x="354.7" y="66.8" width="1" height="1" fill="#262626"/><rect x="202.1" y="160.8" width="1" height="1" fill="#262626"/><rect x="115.2" y="58.8" width="1" height="1" fill="#262626"/><rect x="190.9" y="320.8" width="1" height="1" fill="#262626"/><rect x="445.2" y="115.0" width="1" height="1" fill="#262626"/><rect x="386.0" y="284.1" width="1" height="1" fill="#262626"/><rect x="65.4" y="188.2" width="1" height="1" fill="#262626"/><rect x="426.6" y="111.1" width="1" height="1" fill="#262626"/><rect x="417.3" y="66.3" width="1" height="1" fill="#262626"/><rect x="381.9" y="268.8" width="1" height="1" fill="#262626"/><rect x="59.5" y="75.2" width="1" height="1" fill="#363636"/><rect x="151.7" y="263.5" width="1" height="1" fill="#363636"/><rect x="185.7" y="132.9" width="1" height="1" fill="#363636"/><rect x="301.0" y="130.1" width="1" height="1" fill="#262626"/><rect x="176.3" y="133.8" width="1" height="1" fill="#262626"/><rect x="358.6" y="310.0" width="1" height="1" fill="#262626"/><rect x="436.4" y="64.7" width="1" height="1" fill="#262626"/><rect x="242.2" y="321.1" width="1" height="1" fill="#363636"/><rect x="205.4" y="127.0" width="1" height="1" fill="#262626"/><rect x="249.8" y="313.2" width="1" height="1" fill="#262626"/><rect x="378.1" y="261.1" width="1" height="1" fill="#363636"/><rect x="365.7" y="225.0" width="1" height="1" fill="#262626"/><rect x="177.6" y="157.5" width="1" height="1" fill="#262626"/><rect x="77.8" y="112.3" width="1" height="1" fill="#262626"/><rect x="147.6" y="75.8" width="1" height="1" fill="#262626"/><rect x="274.3" y="147.6" width="1" height="1" fill="#363636"/><rect x="411.6" y="329.7" width="1" height="1" fill="#262626"/><rect x="79.9" y="84.5" width="1" height="1" fill="#262626"/><rect x="339.6" y="180.9" width="1" height="1" fill="#262626"/><rect x="218.0" y="228.6" width="1" height="1" fill="#262626"/><rect x="355.4" y="290.9" width="1" height="1" fill="#262626"/><rect x="95.3" y="289.2" width="1" height="1" fill="#262626"/><rect x="280.3" y="160.6" width="1" height="1" fill="#262626"/><rect x="127.7" y="126.0" width="1" height="1" fill="#262626"/><rect x="108.6" y="301.1" width="1" height="1" fill="#262626"/><rect x="180.4" y="166.9" width="1" height="1" fill="#363636"/><rect x="255.5" y="121.6" width="1" height="1" fill="#363636"/><rect x="316.1" y="330.5" width="1" height="1" fill="#262626"/><rect x="242.0" y="283.3" width="1" height="1" fill="#363636"/><rect x="424.5" y="69.1" width="1" height="1" fill="#262626"/><rect x="94.5" y="110.1" width="1" height="1" fill="#363636"/><rect x="287.0" y="313.8" width="1" height="1" fill="#262626"/><rect x="404.4" y="181.5" width="1" height="1" fill="#262626"/><rect x="367.8" y="318.1" width="1" height="1" fill="#262626"/><rect x="292.4" y="228.5" width="1" height="1" fill="#262626"/><rect x="198.0" y="96.9" width="1" height="1" fill="#262626"/><rect x="150.8" y="222.8" width="1" height="1" fill="#262626"/><rect x="129.4" y="61.1" width="1" height="1" fill="#262626"/><rect x="326.5" y="108.9" width="1" height="1" fill="#262626"/><rect x="129.4" y="276.7" width="1" height="1" fill="#262626"/><rect x="71.3" y="85.9" width="1" height="1" fill="#262626"/><rect x="273.3" y="233.8" width="1" height="1" fill="#262626"/><rect x="112.9" y="249.2" width="1" height="1" fill="#262626"/><rect x="162.6" y="142.6" width="1" height="1" fill="#363636"/><rect x="174.6" y="213.8" width="1" height="1" fill="#262626"/><rect x="217.8" y="295.7" width="1" height="1" fill="#363636"/><rect x="196.0" y="112.2" width="1" height="1" fill="#262626"/><rect x="129.5" y="59.6" width="1" height="1" fill="#363636"/><rect x="220.9" y="283.6" width="1" height="1" fill="#262626"/><rect x="411.4" y="184.7" width="1" height="1" fill="#262626"/><rect x="51.2" y="209.7" width="1" height="1" fill="#262626"/><rect x="422.6" y="82.5" width="1" height="1" fill="#262626"/><rect x="198.9" y="196.7" width="1" height="1" fill="#262626"/><rect x="162.6" y="201.3" width="1" height="1" fill="#363636"/><rect x="90.1" y="192.9" width="1" height="1" fill="#363636"/><rect x="446.3" y="112.3" width="1" height="1" fill="#262626"/><rect x="436.4" y="326.3" width="1" height="1" fill="#262626"/><rect x="67.2" y="312.7" width="1" height="1" fill="#262626"/><rect x="420.3" y="228.6" width="1" height="1" fill="#363636"/><rect x="111.5" y="274.1" width="1" height="1" fill="#262626"/><rect x="212.9" y="290.7" width="1" height="1" fill="#363636"/><rect x="120.9" y="118.0" width="1" height="1" fill="#262626"/><rect x="259.9" y="163.5" width="1" height="1" fill="#262626"/><rect x="147.5" y="257.3" width="1" height="1" fill="#363636"/><rect x="62.1" y="212.6" width="1" height="1" fill="#262626"/><rect x="60.8" y="288.5" width="1" height="1" fill="#262626"/><rect x="293.8" y="209.3" width="1" height="1" fill="#262626"/><rect x="172.1" y="173.5" width="1" height="1" fill="#262626"/><rect x="221.7" y="239.2" width="1" height="1" fill="#262626"/><rect x="226.9" y="64.4" width="1" height="1" fill="#262626"/><rect x="248.1" y="122.7" width="1" height="1" fill="#262626"/><rect x="368.7" y="184.0" width="1" height="1" fill="#262626"/><rect x="241.4" y="87.4" width="1" height="1" fill="#262626"/><rect x="223.7" y="83.2" width="1" height="1" fill="#262626"/><rect x="256.7" y="69.2" width="1" height="1" fill="#262626"/><rect x="79.1" y="259.7" width="1" height="1" fill="#262626"/><rect x="257.3" y="72.9" width="1" height="1" fill="#262626"/><rect x="201.8" y="319.5" width="1" height="1" fill="#262626"/><rect x="400.7" y="331.9" width="1" height="1" fill="#262626"/><rect x="383.2" y="111.3" width="1" height="1" fill="#363636"/><rect x="249.1" y="321.1" width="1" height="1" fill="#363636"/><rect x="113.5" y="274.8" width="1" height="1" fill="#363636"/><rect x="72.2" y="154.5" width="1" height="1" fill="#262626"/><rect x="110.9" y="304.5" width="1" height="1" fill="#262626"/><rect x="383.5" y="97.5" width="1" height="1" fill="#262626"/><rect x="426.8" y="115.3" width="1" height="1" fill="#262626"/><rect x="255.0" y="145.7" width="1" height="1" fill="#262626"/><rect x="120.6" y="102.3" width="1" height="1" fill="#363636"/><rect x="327.1" y="304.2" width="1" height="1" fill="#262626"/><rect x="370.7" y="89.6" width="1" height="1" fill="#262626"/><rect x="309.1" y="156.9" width="1" height="1" fill="#363636"/><rect x="275.4" y="217.5" width="1" height="1" fill="#363636"/><rect x="88.4" y="331.1" width="1" height="1" fill="#262626"/><rect x="208.6" y="277.4" width="1" height="1" fill="#262626"/><rect x="456.1" y="216.8" width="1" height="1" fill="#262626"/><rect x="362.3" y="179.6" width="1" height="1" fill="#262626"/><rect x="353.6" y="71.3" width="1" height="1" fill="#363636"/><rect x="150.3" y="233.8" width="1" height="1" fill="#363636"/><rect x="288.1" y="240.5" width="1" height="1" fill="#262626"/><rect x="45.7" y="67.3" width="1" height="1" fill="#262626"/><rect x="300.7" y="176.9" width="1" height="1" fill="#262626"/><rect x="416.7" y="94.3" width="1" height="1" fill="#262626"/><rect x="316.0" y="64.1" width="1" height="1" fill="#262626"/><rect x="192.3" y="87.2" width="1" height="1" fill="#262626"/><rect x="138.1" y="218.5" width="1" height="1" fill="#262626"/><rect x="129.7" y="229.6" width="1" height="1" fill="#262626"/><rect x="100.9" y="315.6" width="1" height="1" fill="#262626"/><rect x="107.0" y="84.3" width="1" height="1" fill="#262626"/><rect x="406.6" y="273.1" width="1" height="1" fill="#262626"/><rect x="154.7" y="61.2" width="1" height="1" fill="#262626"/><rect x="278.4" y="154.3" width="1" height="1" fill="#262626"/><rect x="229.2" y="315.7" width="1" height="1" fill="#262626"/><rect x="148.1" y="306.5" width="1" height="1" fill="#262626"/><rect x="265.6" y="169.6" width="1" height="1" fill="#262626"/><rect x="69.2" y="272.2" width="1" height="1" fill="#262626"/><rect x="273.6" y="316.8" width="1" height="1" fill="#262626"/><rect x="127.8" y="225.2" width="1" height="1" fill="#262626"/><rect x="311.3" y="281.7" width="1" height="1" fill="#262626"/><rect x="173.4" y="140.6" width="1" height="1" fill="#262626"/><rect x="414.1" y="273.3" width="1" height="1" fill="#262626"/><rect x="47.6" y="290.2" width="1" height="1" fill="#262626"/><rect x="238.1" y="262.0" width="1" height="1" fill="#262626"/><rect x="138.8" y="87.0" width="1" height="1" fill="#262626"/><rect x="61.1" y="150.3" width="1" height="1" fill="#262626"/><rect x="333.5" y="290.5" width="1" height="1" fill="#262626"/><rect x="155.4" y="210.3" width="1" height="1" fill="#262626"/><rect x="372.2" y="201.9" width="1" height="1" fill="#262626"/><rect x="311.4" y="323.4" width="1" height="1" fill="#262626"/><rect x="410.2" y="62.2" width="1" height="1" fill="#262626"/><rect x="143.0" y="262.6" width="1" height="1" fill="#363636"/><rect x="354.7" y="147.9" width="1" height="1" fill="#363636"/><rect x="181.3" y="123.8" width="1" height="1" fill="#363636"/><rect x="306.7" y="248.5" width="1" height="1" fill="#262626"/><rect x="451.3" y="187.1" width="1" height="1" fill="#363636"/><rect x="334.5" y="293.8" width="1" height="1" fill="#262626"/><rect x="345.7" y="214.8" width="1" height="1" fill="#262626"/><rect x="133.0" y="229.2" width="1" height="1" fill="#262626"/><rect x="423.0" y="97.8" width="1" height="1" fill="#262626"/><rect x="89.3" y="313.5" width="1" height="1" fill="#262626"/><rect x="103.9" y="65.9" width="1" height="1" fill="#262626"/><rect x="332.4" y="232.3" width="1" height="1" fill="#262626"/><rect x="350.8" y="76.1" width="1" height="1" fill="#262626"/><rect x="195.8" y="282.8" width="1" height="1" fill="#363636"/><rect x="414.9" y="76.1" width="1" height="1" fill="#363636"/><rect x="424.5" y="317.7" width="1" height="1" fill="#262626"/><rect x="130.4" y="88.8" width="1" height="1" fill="#262626"/><rect x="396.8" y="281.3" width="1" height="1" fill="#262626"/><rect x="387.4" y="231.7" width="1" height="1" fill="#262626"/><rect x="86.4" y="84.9" width="1" height="1" fill="#262626"/><rect x="130.1" y="145.8" width="1" height="1" fill="#262626"/><rect x="53.7" y="128.6" width="1" height="1" fill="#262626"/><rect x="342.0" y="159.2" width="1" height="1" fill="#262626"/><rect x="445.1" y="196.5" width="1" height="1" fill="#363636"/><rect x="301.6" y="66.5" width="1" height="1" fill="#262626"/><rect x="226.1" y="270.6" width="1" height="1" fill="#262626"/><rect x="337.4" y="205.9" width="1" height="1" fill="#262626"/><rect x="402.8" y="83.0" width="1" height="1" fill="#363636"/><rect x="115.7" y="58.4" width="1" height="1" fill="#262626"/><rect x="361.3" y="326.9" width="1" height="1" fill="#262626"/><rect x="248.7" y="193.2" width="1" height="1" fill="#262626"/><rect x="121.6" y="194.0" width="1" height="1" fill="#262626"/><rect x="390.2" y="129.7" width="1" height="1" fill="#363636"/><rect x="162.7" y="117.0" width="1" height="1" fill="#262626"/><rect x="251.8" y="88.2" width="1" height="1" fill="#262626"/><rect x="78.6" y="274.7" width="1" height="1" fill="#262626"/><rect x="371.6" y="230.7" width="1" height="1" fill="#262626"/><rect x="211.5" y="166.5" width="1" height="1" fill="#363636"/><rect x="80.8" y="302.3" width="1" height="1" fill="#262626"/><rect x="130.5" y="130.4" width="1" height="1" fill="#363636"/><rect x="253.0" y="162.3" width="1" height="1" fill="#363636"/><rect x="141.9" y="184.7" width="1" height="1" fill="#262626"/><rect x="358.1" y="265.1" width="1" height="1" fill="#262626"/><rect x="189.6" y="147.8" width="1" height="1" fill="#262626"/><rect x="394.9" y="240.1" width="1" height="1" fill="#262626"/><rect x="115.4" y="178.7" width="1" height="1" fill="#262626"/><rect x="285.4" y="92.7" width="1" height="1" fill="#262626"/><rect x="412.3" y="123.4" width="1" height="1" fill="#262626"/><rect x="170.1" y="251.4" width="1" height="1" fill="#363636"/><rect x="109.2" y="100.9" width="1" height="1" fill="#262626"/><rect x="180.5" y="201.6" width="1" height="1" fill="#262626"/><rect x="181.2" y="110.1" width="1" height="1" fill="#363636"/><rect x="347.4" y="86.0" width="1" height="1" fill="#363636"/><rect x="87.2" y="163.7" width="1" height="1" fill="#363636"/><rect x="374.9" y="259.7" width="1" height="1" fill="#262626"/><rect x="126.4" y="233.4" width="1" height="1" fill="#262626"/><rect x="130.7" y="164.8" width="1" height="1" fill="#262626"/><rect x="210.6" y="275.5" width="1" height="1" fill="#262626"/><rect x="252.7" y="231.9" width="1" height="1" fill="#262626"/><rect x="103.9" y="224.0" width="1" height="1" fill="#262626"/><rect x="352.5" y="307.7" width="1" height="1" fill="#262626"/><rect x="283.2" y="264.0" width="1" height="1" fill="#262626"/><rect x="139.9" y="256.6" width="1" height="1" fill="#363636"/><rect x="366.2" y="250.5" width="1" height="1" fill="#363636"/><rect x="327.0" y="234.4" width="1" height="1" fill="#262626"/><rect x="174.9" y="230.8" width="1" height="1" fill="#262626"/><rect x="219.1" y="273.2" width="1" height="1" fill="#262626"/><rect x="306.3" y="126.8" width="1" height="1" fill="#262626"/><rect x="233.9" y="228.9" width="1" height="1" fill="#262626"/><rect x="325.2" y="313.8" width="1" height="1" fill="#262626"/><rect x="316.6" y="272.0" width="1" height="1" fill="#262626"/><rect x="248.3" y="326.0" width="1" height="1" fill="#262626"/><rect x="270.5" y="102.2" width="1" height="1" fill="#262626"/><rect x="435.3" y="200.8" width="1" height="1" fill="#262626"/><rect x="283.4" y="206.8" width="1" height="1" fill="#262626"/><rect x="257.6" y="233.8" width="1" height="1" fill="#363636"/><rect x="261.5" y="170.8" width="1" height="1" fill="#363636"/><rect x="132.2" y="246.2" width="1" height="1" fill="#262626"/><rect x="361.5" y="91.7" width="1" height="1" fill="#363636"/><rect x="192.5" y="73.6" width="1" height="1" fill="#262626"/><rect x="210.9" y="61.7" width="1" height="1" fill="#262626"/><rect x="219.5" y="250.0" width="1" height="1" fill="#262626"/><rect x="155.0" y="119.7" width="1" height="1" fill="#262626"/><rect x="435.1" y="202.9" width="1" height="1" fill="#262626"/><rect x="377.6" y="165.8" width="1" height="1" fill="#262626"/><rect x="98.7" y="271.6" width="1" height="1" fill="#363636"/><rect x="308.2" y="187.0" width="1" height="1" fill="#262626"/><rect x="138.8" y="323.1" width="1" height="1" fill="#262626"/><rect x="310.1" y="283.2" width="1" height="1" fill="#363636"/><rect x="239.3" y="138.9" width="1" height="1" fill="#262626"/><rect x="96.9" y="287.3" width="1" height="1" fill="#262626"/><rect x="398.0" y="131.5" width="1" height="1" fill="#262626"/><rect x="150.2" y="175.2" width="1" height="1" fill="#262626"/><rect x="46.1" y="256.5" width="1" height="1" fill="#262626"/><rect x="146.7" y="141.0" width="1" height="1" fill="#262626"/><rect x="222.8" y="233.3" width="1" height="1" fill="#262626"/><rect x="195.4" y="313.4" width="1" height="1" fill="#363636"/><rect x="68.7" y="285.7" width="1" height="1" fill="#363636"/><rect x="370.4" y="96.6" width="1" height="1" fill="#363636"/><rect x="307.8" y="62.1" width="1" height="1" fill="#262626"/><rect x="440.0" y="238.4" width="1" height="1" fill="#262626"/><rect x="87.1" y="97.3" width="1" height="1" fill="#262626"/><rect x="367.2" y="153.3" width="1" height="1" fill="#262626"/><rect x="420.2" y="275.7" width="1" height="1" fill="#262626"/><rect x="414.8" y="225.3" width="1" height="1" fill="#262626"/><rect x="322.4" y="303.8" width="1" height="1" fill="#262626"/><rect x="393.1" y="112.3" width="1" height="1" fill="#262626"/><rect x="265.3" y="262.0" width="1" height="1" fill="#262626"/><rect x="411.3" y="210.6" width="1" height="1" fill="#262626"/><rect x="142.2" y="96.3" width="1" height="1" fill="#262626"/><rect x="69.3" y="186.5" width="1" height="1" fill="#262626"/><rect x="248.9" y="195.0" width="1" height="1" fill="#262626"/><rect x="403.1" y="59.8" width="1" height="1" fill="#363636"/><rect x="239.2" y="212.7" width="1" height="1" fill="#262626"/><rect x="393.8" y="161.1" width="1" height="1" fill="#262626"/><rect x="443.7" y="78.7" width="1" height="1" fill="#262626"/><rect x="309.0" y="65.8" width="1" height="1" fill="#262626"/><rect x="328.3" y="314.2" width="1" height="1" fill="#262626"/><rect x="452.4" y="198.4" width="1" height="1" fill="#262626"/><rect x="417.5" y="67.3" width="1" height="1" fill="#262626"/><rect x="304.5" y="151.1" width="1" height="1" fill="#363636"/><rect x="197.0" y="188.5" width="1" height="1" fill="#262626"/><rect x="364.8" y="115.9" width="1" height="1" fill="#262626"/><rect x="220.3" y="210.4" width="1" height="1" fill="#363636"/><rect x="166.5" y="285.6" width="1" height="1" fill="#262626"/><rect x="254.1" y="132.7" width="1" height="1" fill="#262626"/><rect x="449.6" y="238.0" width="1" height="1" fill="#262626"/><rect x="182.3" y="145.2" width="1" height="1" fill="#262626"/><rect x="288.4" y="232.6" width="1" height="1" fill="#262626"/><rect x="61.6" y="256.7" width="1" height="1" fill="#363636"/><rect x="271.3" y="71.7" width="1" height="1" fill="#262626"/><rect x="47.6" y="110.2" width="1" height="1" fill="#363636"/><rect x="297.6" y="239.0" width="1" height="1" fill="#262626"/><rect x="422.6" y="226.2" width="1" height="1" fill="#262626"/><rect x="305.1" y="249.5" width="1" height="1" fill="#262626"/><rect x="327.6" y="116.4" width="1" height="1" fill="#262626"/><rect x="235.0" y="267.7" width="1" height="1" fill="#262626"/><rect x="120.2" y="68.2" width="1" height="1" fill="#262626"/><rect x="424.3" y="238.3" width="1" height="1" fill="#262626"/><rect x="386.4" y="274.3" width="1" height="1" fill="#262626"/><rect x="152.1" y="141.1" width="1" height="1" fill="#262626"/><rect x="177.2" y="176.4" width="1" height="1" fill="#262626"/><rect x="432.6" y="73.0" width="1" height="1" fill="#262626"/><rect x="61.3" y="90.7" width="1" height="1" fill="#363636"/><rect x="283.8" y="310.6" width="1" height="1" fill="#262626"/><rect x="50.9" y="164.5" width="1" height="1" fill="#262626"/><rect x="434.2" y="327.7" width="1" height="1" fill="#262626"/><rect x="216.2" y="86.1" width="1" height="1" fill="#262626"/><rect x="133.1" y="99.7" width="1" height="1" fill="#262626"/><rect x="47.0" y="246.0" width="1" height="1" fill="#262626"/><rect x="446.0" y="82.2" width="1" height="1" fill="#363636"/><rect x="98.5" y="62.9" width="1" height="1" fill="#262626"/><rect x="145.5" y="259.7" width="1" height="1" fill="#262626"/><rect x="65.8" y="270.9" width="1" height="1" fill="#262626"/><rect x="400.0" y="258.7" width="1" height="1" fill="#262626"/><rect x="305.9" y="253.0" width="1" height="1" fill="#262626"/><rect x="431.9" y="127.9" width="1" height="1" fill="#363636"/><rect x="342.6" y="61.1" width="1" height="1" fill="#262626"/><rect x="315.0" y="282.8" width="1" height="1" fill="#262626"/><rect x="174.1" y="258.6" width="1" height="1" fill="#262626"/><rect x="402.3" y="191.7" width="1" height="1" fill="#262626"/><rect x="197.5" y="216.1" width="1" height="1" fill="#262626"/><rect x="325.9" y="97.8" width="1" height="1" fill="#262626"/><rect x="195.8" y="235.3" width="1" height="1" fill="#262626"/><rect x="218.5" y="164.1" width="1" height="1" fill="#262626"/><rect x="437.1" y="273.8" width="1" height="1" fill="#262626"/><rect x="166.3" y="74.7" width="1" height="1" fill="#363636"/><rect x="336.9" y="285.5" width="1" height="1" fill="#262626"/><rect x="296.4" y="326.8" width="1" height="1" fill="#363636"/><rect x="294.5" y="142.9" width="1" height="1" fill="#262626"/><rect x="413.6" y="161.6" width="1" height="1" fill="#262626"/><rect x="294.7" y="304.4" width="1" height="1" fill="#363636"/><rect x="162.6" y="58.5" width="1" height="1" fill="#262626"/><rect x="220.3" y="219.3" width="1" height="1" fill="#363636"/><rect x="413.3" y="69.6" width="1" height="1" fill="#363636"/><rect x="381.9" y="296.5" width="1" height="1" fill="#262626"/><rect x="158.6" y="292.1" width="1" height="1" fill="#363636"/><rect x="329.1" y="309.3" width="1" height="1" fill="#262626"/><rect x="80.3" y="210.3" width="1" height="1" fill="#262626"/><rect x="128.2" y="264.3" width="1" height="1" fill="#363636"/><rect x="142.1" y="224.9" width="1" height="1" fill="#262626"/><rect x="238.1" y="114.8" width="1" height="1" fill="#262626"/><rect x="356.7" y="275.7" width="1" height="1" fill="#262626"/><rect x="81.4" y="279.8" width="1" height="1" fill="#262626"/><rect x="141.6" y="217.4" width="1" height="1" fill="#363636"/><rect x="412.3" y="201.5" width="1" height="1" fill="#262626"/><rect x="289.6" y="110.0" width="1" height="1" fill="#262626"/><rect x="120.0" y="250.8" width="1" height="1" fill="#262626"/><rect x="279.2" y="168.7" width="1" height="1" fill="#262626"/><rect x="106.8" y="70.3" width="1" height="1" fill="#363636"/><rect x="200.2" y="87.2" width="1" height="1" fill="#262626"/><rect x="371.7" y="100.9" width="1" height="1" fill="#262626"/><rect x="188.1" y="200.9" width="1" height="1" fill="#262626"/><rect x="58.9" y="330.4" width="1" height="1" fill="#363636"/><rect x="246.8" y="214.0" width="1" height="1" fill="#262626"/><rect x="368.4" y="175.1" width="1" height="1" fill="#363636"/><rect x="363.4" y="283.2" width="1" height="1" fill="#363636"/><rect x="150.4" y="68.4" width="1" height="1" fill="#262626"/><rect x="120.0" y="81.0" width="1" height="1" fill="#262626"/><rect x="276.3" y="297.4" width="1" height="1" fill="#262626"/><rect x="438.1" y="308.2" width="1" height="1" fill="#262626"/><rect x="293.2" y="167.3" width="1" height="1" fill="#262626"/><rect x="443.1" y="128.7" width="1" height="1" fill="#262626"/><rect x="310.9" y="321.0" width="1" height="1" fill="#262626"/><rect x="208.1" y="181.3" width="1" height="1" fill="#262626"/><rect x="445.8" y="330.7" width="1" height="1" fill="#262626"/><rect x="61.0" y="128.4" width="1" height="1" fill="#262626"/><rect x="419.6" y="306.8" width="1" height="1" fill="#363636"/><rect x="64.5" y="274.3" width="1" height="1" fill="#262626"/><rect x="313.4" y="329.0" width="1" height="1" fill="#262626"/><rect x="105.1" y="265.6" width="1" height="1" fill="#363636"/><rect x="325.9" y="140.2" width="1" height="1" fill="#262626"/><rect x="359.5" y="87.0" width="1" height="1" fill="#262626"/><rect x="151.7" y="92.1" width="1" height="1" fill="#262626"/><rect x="115.0" y="123.6" width="1" height="1" fill="#262626"/><rect x="326.2" y="61.5" width="1" height="1" fill="#262626"/><rect x="126.0" y="67.9" width="1" height="1" fill="#363636"/><rect x="136.5" y="314.8" width="1" height="1" fill="#363636"/><rect x="413.8" y="96.4" width="1" height="1" fill="#262626"/><rect x="85.2" y="313.4" width="1" height="1" fill="#363636"/><rect x="305.8" y="182.4" width="1" height="1" fill="#262626"/><rect x="386.6" y="189.3" width="1" height="1" fill="#262626"/><rect x="104.2" y="119.0" width="1" height="1" fill="#262626"/><rect x="341.2" y="210.2" width="1" height="1" fill="#262626"/><rect x="406.4" y="131.3" width="1" height="1" fill="#262626"/><rect x="109.6" y="132.6" width="1" height="1" fill="#363636"/><rect x="183.8" y="104.1" width="1" height="1" fill="#262626"/><rect x="177.0" y="306.4" width="1" height="1" fill="#262626"/><rect x="451.1" y="73.6" width="1" height="1" fill="#363636"/><rect x="322.3" y="116.1" width="1" height="1" fill="#262626"/><rect x="163.8" y="128.9" width="1" height="1" fill="#262626"/><rect x="196.2" y="330.5" width="1" height="1" fill="#363636"/><rect x="428.9" y="84.8" width="1" height="1" fill="#262626"/><rect x="416.9" y="73.8" width="1" height="1" fill="#262626"/><rect x="166.8" y="327.1" width="1" height="1" fill="#262626"/><rect x="379.9" y="151.7" width="1" height="1" fill="#262626"/><rect x="45.8" y="286.9" width="1" height="1" fill="#262626"/><rect x="122.1" y="177.7" width="1" height="1" fill="#363636"/><rect x="135.6" y="215.1" width="1" height="1" fill="#262626"/><rect x="119.8" y="269.9" width="1" height="1" fill="#262626"/><rect x="126.6" y="79.8" width="1" height="1" fill="#262626"/><rect x="297.6" y="194.3" width="1" height="1" fill="#262626"/><rect x="130.5" y="226.4" width="1" height="1" fill="#262626"/><rect x="381.8" y="218.3" width="1" height="1" fill="#262626"/><rect x="72.3" y="259.5" width="1" height="1" fill="#262626"/><rect x="344.5" y="73.2" width="1" height="1" fill="#363636"/><rect x="184.1" y="289.5" width="1" height="1" fill="#363636"/><rect x="249.6" y="62.2" width="1" height="1" fill="#363636"/><rect x="242.8" y="297.8" width="1" height="1" fill="#262626"/><rect x="122.2" y="286.7" width="1" height="1" fill="#262626"/><rect x="112.8" y="160.1" width="1" height="1" fill="#262626"/><rect x="46.9" y="201.0" width="1" height="1" fill="#262626"/><rect x="259.0" y="91.2" width="1" height="1" fill="#262626"/><rect x="383.9" y="296.0" width="1" height="1" fill="#262626"/><rect x="340.1" y="162.9" width="1" height="1" fill="#262626"/><rect x="70.4" y="298.0" width="1" height="1" fill="#363636"/><rect x="250.3" y="199.2" width="1" height="1" fill="#262626"/><rect x="268.0" y="63.7" width="1" height="1" fill="#363636"/><rect x="137.8" y="108.2" width="1" height="1" fill="#262626"/><rect x="148.9" y="282.7" width="1" height="1" fill="#262626"/><rect x="85.0" y="250.2" width="1" height="1" fill="#262626"/><rect x="52.3" y="222.8" width="1" height="1" fill="#262626"/><rect x="262.0" y="251.2" width="1" height="1" fill="#262626"/><rect x="405.9" y="255.2" width="1" height="1" fill="#262626"/><rect x="96.1" y="193.7" width="1" height="1" fill="#262626"/><rect x="161.0" y="91.6" width="1" height="1" fill="#262626"/><rect x="101.8" y="220.7" width="1" height="1" fill="#363636"/><rect x="106.1" y="215.5" width="1" height="1" fill="#262626"/><rect x="113.2" y="285.2" width="1" height="1" fill="#363636"/><rect x="206.3" y="173.6" width="1" height="1" fill="#363636"/><rect x="263.1" y="166.8" width="1" height="1" fill="#363636"/><rect x="367.4" y="151.1" width="1" height="1" fill="#262626"/><rect x="184.1" y="177.8" width="1" height="1" fill="#363636"/><rect x="378.8" y="309.0" width="1" height="1" fill="#363636"/><rect x="396.8" y="72.7" width="1" height="1" fill="#262626"/><rect x="442.5" y="314.9" width="1" height="1" fill="#262626"/><rect x="220.2" y="232.0" width="1" height="1" fill="#262626"/><rect x="265.3" y="77.0" width="1" height="1" fill="#262626"/><rect x="254.5" y="63.7" width="1" height="1" fill="#262626"/><rect x="447.4" y="271.6" width="1" height="1" fill="#363636"/><rect x="307.8" y="280.5" width="1" height="1" fill="#363636"/><rect x="412.1" y="67.5" width="1" height="1" fill="#262626"/><rect x="155.3" y="244.6" width="1" height="1" fill="#262626"/><rect x="270.0" y="312.2" width="1" height="1" fill="#262626"/><rect x="149.0" y="201.1" width="1" height="1" fill="#262626"/><rect x="439.6" y="137.1" width="1" height="1" fill="#262626"/><rect x="313.7" y="91.1" width="1" height="1" fill="#262626"/><rect x="441.8" y="199.3" width="1" height="1" fill="#262626"/><rect x="238.6" y="204.8" width="1" height="1" fill="#262626"/><rect x="96.4" y="94.1" width="1" height="1" fill="#262626"/><rect x="213.7" y="137.3" width="1" height="1" fill="#262626"/><rect x="81.5" y="208.2" width="1" height="1" fill="#363636"/><rect x="298.1" y="214.8" width="1" height="1" fill="#262626"/><rect x="128.5" y="253.3" width="1" height="1" fill="#262626"/><rect x="272.4" y="226.5" width="1" height="1" fill="#262626"/><rect x="173.9" y="124.6" width="1" height="1" fill="#262626"/><rect x="257.7" y="163.4" width="1" height="1" fill="#262626"/><rect x="49.9" y="155.0" width="1" height="1" fill="#363636"/><rect x="144.0" y="211.1" width="1" height="1" fill="#262626"/><rect x="163.2" y="329.6" width="1" height="1" fill="#262626"/><rect x="365.4" y="101.6" width="1" height="1" fill="#262626"/><rect x="406.6" y="179.0" width="1" height="1" fill="#262626"/><rect x="206.0" y="179.0" width="1" height="1" fill="#262626"/><rect x="90.3" y="119.9" width="1" height="1" fill="#363636"/><rect x="351.5" y="100.5" width="1" height="1" fill="#262626"/><rect x="191.3" y="243.7" width="1" height="1" fill="#262626"/><rect x="397.7" y="283.8" width="1" height="1" fill="#262626"/><rect x="351.6" y="262.4" width="1" height="1" fill="#262626"/><rect x="242.2" y="273.9" width="1" height="1" fill="#262626"/><rect x="424.6" y="93.0" width="1" height="1" fill="#363636"/><rect x="46.8" y="268.6" width="1" height="1" fill="#262626"/><rect x="251.6" y="322.8" width="1" height="1" fill="#262626"/><rect x="218.4" y="273.5" width="1" height="1" fill="#363636"/><rect x="297.0" y="162.4" width="1" height="1" fill="#262626"/><rect x="235.0" y="256.8" width="1" height="1" fill="#262626"/><rect x="207.1" y="210.7" width="1" height="1" fill="#262626"/><rect x="178.6" y="274.4" width="1" height="1" fill="#363636"/><rect x="252.3" y="180.1" width="1" height="1" fill="#262626"/><rect x="171.2" y="97.9" width="1" height="1" fill="#262626"/><rect x="286.4" y="82.2" width="1" height="1" fill="#363636"/><rect x="179.4" y="289.9" width="1" height="1" fill="#363636"/><rect x="442.9" y="114.2" width="1" height="1" fill="#262626"/><rect x="422.9" y="60.9" width="1" height="1" fill="#262626"/><rect x="279.4" y="194.8" width="1" height="1" fill="#363636"/><rect x="366.0" y="206.1" width="1" height="1" fill="#363636"/><rect x="259.7" y="200.2" width="1" height="1" fill="#262626"/><rect x="206.6" y="156.4" width="1" height="1" fill="#262626"/><rect x="190.7" y="318.7" width="1" height="1" fill="#262626"/><rect x="263.0" y="85.2" width="1" height="1" fill="#262626"/><rect x="211.4" y="212.4" width="1" height="1" fill="#262626"/><rect x="410.1" y="323.2" width="1" height="1" fill="#262626"/><rect x="227.7" y="229.8" width="1" height="1" fill="#363636"/><rect x="187.5" y="203.8" width="1" height="1" fill="#363636"/><rect x="115.8" y="145.5" width="1" height="1" fill="#363636"/><rect x="387.8" y="199.0" width="1" height="1" fill="#262626"/><rect x="416.2" y="247.7" width="1" height="1" fill="#363636"/><rect x="456.0" y="302.2" width="1" height="1" fill="#262626"/><rect x="109.9" y="137.7" width="1" height="1" fill="#262626"/><rect x="254.5" y="109.7" width="1" height="1" fill="#262626"/><rect x="306.5" y="223.9" width="1" height="1" fill="#262626"/><rect x="457.4" y="233.0" width="1" height="1" fill="#262626"/><rect x="215.7" y="274.6" width="1" height="1" fill="#262626"/><rect x="331.6" y="59.1" width="1" height="1" fill="#262626"/><rect x="394.5" y="219.2" width="1" height="1" fill="#262626"/><rect x="126.6" y="194.9" width="1" height="1" fill="#262626"/><rect x="155.4" y="235.9" width="1" height="1" fill="#262626"/><rect x="458.8" y="216.0" width="1" height="1" fill="#262626"/><rect x="95.4" y="101.1" width="1" height="1" fill="#262626"/><rect x="89.3" y="85.5" width="1" height="1" fill="#262626"/><rect x="261.8" y="284.4" width="1" height="1" fill="#262626"/><rect x="379.7" y="75.1" width="1" height="1" fill="#262626"/><rect x="364.8" y="146.8" width="1" height="1" fill="#262626"/><rect x="191.8" y="104.6" width="1" height="1" fill="#262626"/><rect x="86.3" y="306.6" width="1" height="1" fill="#262626"/><rect x="189.8" y="181.7" width="1" height="1" fill="#262626"/><rect x="67.7" y="302.9" width="1" height="1" fill="#262626"/><rect x="443.2" y="178.9" width="1" height="1" fill="#262626"/><rect x="148.5" y="70.1" width="1" height="1" fill="#363636"/><rect x="399.7" y="144.6" width="1" height="1" fill="#363636"/><rect x="383.6" y="141.5" width="1" height="1" fill="#262626"/><rect x="443.4" y="194.3" width="1" height="1" fill="#363636"/><rect x="145.8" y="165.2" width="1" height="1" fill="#262626"/><rect x="136.9" y="143.0" width="1" height="1" fill="#363636"/><rect x="246.0" y="276.0" width="1" height="1" fill="#262626"/><rect x="117.0" y="156.6" width="1" height="1" fill="#262626"/><rect x="448.2" y="137.9" width="1" height="1" fill="#262626"/><rect x="92.7" y="204.8" width="1" height="1" fill="#262626"/><rect x="212.3" y="76.0" width="1" height="1" fill="#262626"/><rect x="387.7" y="154.6" width="1" height="1" fill="#262626"/><rect x="124.3" y="136.0" width="1" height="1" fill="#262626"/><rect x="59.5" y="240.7" width="1" height="1" fill="#262626"/><rect x="109.7" y="252.1" width="1" height="1" fill="#262626"/><rect x="156.9" y="287.6" width="1" height="1" fill="#262626"/><rect x="229.0" y="288.0" width="1" height="1" fill="#363636"/><rect x="111.1" y="155.1" width="1" height="1" fill="#262626"/><rect x="201.4" y="321.6" width="1" height="1" fill="#262626"/><rect x="439.6" y="196.8" width="1" height="1" fill="#262626"/><rect x="232.9" y="94.0" width="1" height="1" fill="#262626"/><rect x="153.2" y="305.4" width="1" height="1" fill="#262626"/><rect x="197.7" y="125.7" width="1" height="1" fill="#262626"/><rect x="133.2" y="297.9" width="1" height="1" fill="#262626"/><rect x="257.9" y="207.2" width="1" height="1" fill="#262626"/><rect x="365.3" y="163.8" width="1" height="1" fill="#262626"/><rect x="280.6" y="143.5" width="1" height="1" fill="#262626"/><rect x="80.7" y="106.7" width="1" height="1" fill="#363636"/><rect x="178.2" y="240.3" width="1" height="1" fill="#262626"/><rect x="278.2" y="157.4" width="1" height="1" fill="#262626"/><rect x="168.2" y="76.1" width="1" height="1" fill="#262626"/><rect x="139.0" y="92.7" width="1" height="1" fill="#262626"/><rect x="162.2" y="168.9" width="1" height="1" fill="#363636"/><rect x="366.6" y="300.8" width="1" height="1" fill="#363636"/><rect x="99.8" y="134.0" width="1" height="1" fill="#262626"/><rect x="327.0" y="240.5" width="1" height="1" fill="#262626"/><rect x="216.2" y="239.2" width="1" height="1" fill="#262626"/><rect x="148.1" y="290.8" width="1" height="1" fill="#262626"/><rect x="306.0" y="108.0" width="1" height="1" fill="#262626"/><rect x="423.8" y="259.9" width="1" height="1" fill="#262626"/><rect x="61.8" y="69.0" width="1" height="1" fill="#262626"/><rect x="127.2" y="141.3" width="1" height="1" fill="#262626"/><rect x="61.3" y="143.5" width="1" height="1" fill="#262626"/><rect x="119.6" y="288.9" width="1" height="1" fill="#262626"/><rect x="342.4" y="128.0" width="1" height="1" fill="#262626"/><rect x="329.0" y="154.0" width="1" height="1" fill="#262626"/><rect x="391.2" y="271.5" width="1" height="1" fill="#262626"/><rect x="62.8" y="292.9" width="1" height="1" fill="#262626"/><rect x="64.6" y="125.2" width="1" height="1" fill="#262626"/><rect x="373.4" y="115.8" width="1" height="1" fill="#363636"/><rect x="356.1" y="81.7" width="1" height="1" fill="#262626"/><rect x="208.4" y="263.6" width="1" height="1" fill="#363636"/><rect x="161.7" y="82.7" width="1" height="1" fill="#363636"/><rect x="220.9" y="313.8" width="1" height="1" fill="#262626"/><rect x="351.5" y="286.2" width="1" height="1" fill="#262626"/><rect x="232.9" y="72.9" width="1" height="1" fill="#262626"/><rect x="222.8" y="198.8" width="1" height="1" fill="#363636"/><rect x="98.0" y="267.5" width="1" height="1" fill="#262626"/><rect x="336.6" y="279.6" width="1" height="1" fill="#262626"/><rect x="271.8" y="324.6" width="1" height="1" fill="#262626"/><rect x="270.7" y="126.7" width="1" height="1" fill="#262626"/><rect x="193.5" y="171.2" width="1" height="1" fill="#262626"/><rect x="173.9" y="95.6" width="1" height="1" fill="#262626"/><rect x="323.2" y="123.4" width="1" height="1" fill="#262626"/><rect x="258.9" y="180.4" width="1" height="1" fill="#363636"/><rect x="190.9" y="140.3" width="1" height="1" fill="#363636"/><rect x="103.9" y="212.9" width="1" height="1" fill="#262626"/><rect x="383.4" y="208.8" width="1" height="1" fill="#262626"/><rect x="115.2" y="241.3" width="1" height="1" fill="#262626"/><rect x="236.4" y="268.7" width="1" height="1" fill="#363636"/><rect x="92.5" y="137.6" width="1" height="1" fill="#262626"/><rect x="130.7" y="74.6" width="1" height="1" fill="#262626"/><rect x="126.8" y="250.9" width="1" height="1" fill="#262626"/><rect x="91.9" y="147.2" width="1" height="1" fill="#262626"/><rect x="195.6" y="104.2" width="1" height="1" fill="#262626"/><rect x="49.5" y="330.8" width="1" height="1" fill="#262626"/><rect x="79.8" y="255.2" width="1" height="1" fill="#363636"/><rect x="278.9" y="87.9" width="1" height="1" fill="#262626"/><rect x="225.2" y="110.2" width="1" height="1" fill="#262626"/><rect x="48.4" y="310.9" width="1" height="1" fill="#262626"/><rect x="305.5" y="315.2" width="1" height="1" fill="#262626"/><rect x="149.3" y="125.6" width="1" height="1" fill="#262626"/><rect x="56.5" y="271.0" width="1" height="1" fill="#363636"/><rect x="168.0" y="109.1" width="1" height="1" fill="#262626"/><rect x="396.0" y="312.8" width="1" height="1" fill="#262626"/><rect x="370.6" y="286.4" width="1" height="1" fill="#262626"/><rect x="180.6" y="108.7" width="1" height="1" fill="#363636"/><rect x="177.9" y="159.3" width="1" height="1" fill="#262626"/><rect x="198.2" y="286.6" width="1" height="1" fill="#262626"/><rect x="62.1" y="213.9" width="1" height="1" fill="#262626"/><rect x="385.2" y="252.0" width="1" height="1" fill="#363636"/><rect x="437.1" y="194.0" width="1" height="1" fill="#262626"/><rect x="110.4" y="140.4" width="1" height="1" fill="#262626"/><rect x="78.3" y="247.2" width="1" height="1" fill="#262626"/><rect x="228.9" y="324.7" width="1" height="1" fill="#262626"/><rect x="61.6" y="178.9" width="1" height="1" fill="#262626"/><rect x="345.0" y="58.8" width="1" height="1" fill="#363636"/><rect x="400.0" y="274.4" width="1" height="1" fill="#262626"/><rect x="162.6" y="239.9" width="1" height="1" fill="#262626"/><rect x="219.8" y="151.1" width="1" height="1" fill="#262626"/><rect x="321.4" y="285.2" width="1" height="1" fill="#363636"/><rect x="113.3" y="139.3" width="1" height="1" fill="#262626"/><rect x="278.8" y="153.7" width="1" height="1" fill="#262626"/><rect x="80.3" y="147.0" width="1" height="1" fill="#262626"/><rect x="448.1" y="307.9" width="1" height="1" fill="#363636"/><rect x="449.4" y="322.5" width="1" height="1" fill="#262626"/><rect x="381.6" y="74.5" width="1" height="1" fill="#262626"/><rect x="297.8" y="139.7" width="1" height="1" fill="#262626"/><rect x="440.4" y="190.2" width="1" height="1" fill="#262626"/><rect x="169.2" y="152.4" width="1" height="1" fill="#363636"/><rect x="56.6" y="109.9" width="1" height="1" fill="#262626"/><rect x="230.6" y="81.4" width="1" height="1" fill="#262626"/><rect x="199.4" y="217.7" width="1" height="1" fill="#262626"/><rect x="264.9" y="213.3" width="1" height="1" fill="#262626"/><rect x="92.4" y="107.6" width="1" height="1" fill="#363636"/><rect x="272.5" y="88.9" width="1" height="1" fill="#363636"/><rect x="150.2" y="84.1" width="1" height="1" fill="#262626"/><rect x="149.4" y="192.6" width="1" height="1" fill="#262626"/><rect x="139.0" y="215.5" width="1" height="1" fill="#262626"/><rect x="258.0" y="219.8" width="1" height="1" fill="#262626"/><rect x="214.3" y="78.2" width="1" height="1" fill="#262626"/><rect x="403.3" y="209.4" width="1" height="1" fill="#262626"/><rect x="359.1" y="89.5" width="1" height="1" fill="#363636"/><rect x="344.5" y="86.1" width="1" height="1" fill="#363636"/><rect x="207.7" y="105.1" width="1" height="1" fill="#363636"/><rect x="278.7" y="271.1" width="1" height="1" fill="#262626"/><rect x="367.1" y="73.8" width="1" height="1" fill="#262626"/><rect x="199.5" y="62.2" width="1" height="1" fill="#262626"/><rect x="133.5" y="140.5" width="1" height="1" fill="#262626"/><rect x="221.8" y="302.4" width="1" height="1" fill="#262626"/><rect x="406.9" y="212.8" width="1" height="1" fill="#363636"/><rect x="406.4" y="104.2" width="1" height="1" fill="#262626"/><rect x="186.7" y="268.0" width="1" height="1" fill="#262626"/><rect x="387.6" y="91.7" width="1" height="1" fill="#262626"/><rect x="351.0" y="318.7" width="1" height="1" fill="#262626"/><rect x="63.1" y="224.0" width="1" height="1" fill="#262626"/><rect x="272.8" y="278.8" width="1" height="1" fill="#262626"/><rect x="429.0" y="243.7" width="1" height="1" fill="#262626"/><rect x="125.2" y="180.9" width="1" height="1" fill="#363636"/><rect x="286.3" y="89.2" width="1" height="1" fill="#262626"/><rect x="90.8" y="278.2" width="1" height="1" fill="#262626"/><rect x="275.0" y="137.8" width="1" height="1" fill="#262626"/><rect x="203.0" y="97.7" width="1" height="1" fill="#363636"/><rect x="268.4" y="247.6" width="1" height="1" fill="#363636"/><rect x="438.7" y="61.8" width="1" height="1" fill="#262626"/><rect x="107.6" y="196.0" width="1" height="1" fill="#363636"/><rect x="377.2" y="67.8" width="1" height="1" fill="#262626"/><rect x="384.6" y="244.9" width="1" height="1" fill="#262626"/><rect x="242.4" y="101.5" width="1" height="1" fill="#363636"/><rect x="208.3" y="298.1" width="1" height="1" fill="#262626"/><rect x="76.5" y="148.5" width="1" height="1" fill="#262626"/><rect x="416.0" y="220.0" width="1" height="1" fill="#262626"/><rect x="115.4" y="157.3" width="1" height="1" fill="#262626"/><rect x="284.5" y="164.7" width="1" height="1" fill="#262626"/><rect x="47.5" y="217.3" width="1" height="1" fill="#262626"/><rect x="53.5" y="184.3" width="1" height="1" fill="#363636"/><rect x="63.8" y="98.1" width="1" height="1" fill="#262626"/><rect x="158.2" y="133.2" width="1" height="1" fill="#262626"/><circle cx="119.5" cy="81.5" r="1.3" fill="url(#gs)"/><circle cx="109.5" cy="80.8" r="1.3" fill="url(#gs)"/><circle cx="117.4" cy="112.7" r="1.3" fill="url(#gs)"/><circle cx="92.5" cy="101.3" r="1.3" fill="url(#gs)"/><circle cx="69.5" cy="93.2" r="1.3" fill="url(#gs)"/><circle cx="46.5" cy="71.5" r="1.3" fill="url(#gs)"/><circle cx="116.3" cy="96.4" r="1.3" fill="url(#gs)"/><circle cx="118.5" cy="68.7" r="1.3" fill="url(#gs)"/><circle cx="61.0" cy="96.4" r="1.3" fill="url(#gs)"/><circle cx="144.0" cy="112.3" r="1.3" fill="url(#gs)"/><circle cx="137.6" cy="98.5" r="1.3" fill="url(#gs)"/><circle cx="128.0" cy="88.5" r="1.3" fill="url(#gs)"/><circle cx="70.6" cy="79.3" r="1.3" fill="url(#gs)"/><circle cx="107.8" cy="84.7" r="1.3" fill="url(#gs)"/><circle cx="48.3" cy="130.4" r="1.3" fill="url(#gs)"/><circle cx="102.5" cy="131.5" r="1.3" fill="url(#gs)"/><circle cx="222.9" cy="100.6" r="1.3" fill="url(#gs)"/><circle cx="224.6" cy="110.2" r="1.3" fill="url(#gs)"/><circle cx="219.3" cy="76.6" r="1.3" fill="url(#gs)"/><circle cx="241.6" cy="75.1" r="1.3" fill="url(#gs)"/><circle cx="241.6" cy="92.1" r="1.3" fill="url(#gs)"/><circle cx="231.0" cy="101.7" r="1.3" fill="url(#gs)"/><circle cx="203.7" cy="93.6" r="1.3" fill="url(#gs)"/><circle cx="168.2" cy="95.3" r="1.3" fill="url(#gs)"/><circle cx="182.0" cy="136.8" r="1.3" fill="url(#gs)"/><circle cx="164.0" cy="127.2" r="1.3" fill="url(#gs)"/><circle cx="193.7" cy="69.8" r="1.3" fill="url(#gs)"/><circle cx="247.0" cy="83.6" r="1.3" fill="url(#gs)"/><circle cx="209.7" cy="127.2" r="1.3" fill="url(#gs)"/><circle cx="199.0" cy="107.0" r="1.3" fill="url(#gs)"/><circle cx="347.1" cy="141.0" r="1.3" fill="url(#gs)"/><circle cx="300.9" cy="97.0" r="1.3" fill="url(#gs)"/><circle cx="271.1" cy="106.0" r="1.3" fill="url(#gs)"/><circle cx="275.8" cy="129.3" r="1.3" fill="url(#gs)"/><circle cx="280.7" cy="70.8" r="1.3" fill="url(#gs)"/><circle cx="299.2" cy="73.0" r="1.3" fill="url(#gs)"/><circle cx="317.5" cy="82.5" r="1.3" fill="url(#gs)"/><circle cx="324.3" cy="83.6" r="1.3" fill="url(#gs)"/><circle cx="302.0" cy="120.8" r="1.3" fill="url(#gs)"/><circle cx="314.8" cy="109.1" r="1.3" fill="url(#gs)"/><circle cx="330.7" cy="66.6" r="1.3" fill="url(#gs)"/><circle cx="274.3" cy="102.7" r="1.3" fill="url(#gs)"/><circle cx="292.4" cy="130.4" r="1.3" fill="url(#gs)"/><circle cx="387.5" cy="145.3" r="1.3" fill="url(#gs)"/><circle cx="374.7" cy="99.6" r="1.3" fill="url(#gs)"/><circle cx="362.4" cy="80.8" r="1.3" fill="url(#gs)"/><circle cx="439.0" cy="71.9" r="1.3" fill="url(#gs)"/><circle cx="451.7" cy="73.0" r="1.3" fill="url(#gs)"/><circle cx="393.2" cy="126.1" r="1.3" fill="url(#gs)"/><circle cx="447.5" cy="103.8" r="1.3" fill="url(#gs)"/><circle cx="389.0" cy="96.4" r="1.3" fill="url(#gs)"/><circle cx="411.3" cy="119.8" r="1.3" fill="url(#gs)"/><circle cx="444.3" cy="126.1" r="1.3" fill="url(#gs)"/><circle cx="365.6" cy="74.0" r="1.3" fill="url(#gs)"/><circle cx="407.0" cy="83.6" r="1.3" fill="url(#gs)"/><circle cx="430.5" cy="126.1" r="1.3" fill="url(#gs)"/><circle cx="89.7" cy="167.1" r="1.3" fill="url(#gs)"/><circle cx="67.4" cy="179.4" r="1.3" fill="url(#gs)"/><circle cx="137.6" cy="192.6" r="1.3" fill="url(#gs)"/><circle cx="140.8" cy="199.6" r="1.3" fill="url(#gs)"/><circle cx="82.7" cy="181.3" r="1.3" fill="url(#gs)"/><circle cx="107.8" cy="216.7" r="1.3" fill="url(#gs)"/><circle cx="97.2" cy="218.8" r="1.3" fill="url(#gs)"/><circle cx="88.7" cy="188.4" r="1.3" fill="url(#gs)"/><circle cx="103.6" cy="191.6" r="1.3" fill="url(#gs)"/><circle cx="83.4" cy="238.8" r="1.3" fill="url(#gs)"/><circle cx="131.2" cy="206.9" r="1.3" fill="url(#gs)"/><circle cx="79.1" cy="208.6" r="1.3" fill="url(#gs)"/><circle cx="64.2" cy="163.9" r="1.3" fill="url(#gs)"/><circle cx="125.9" cy="230.9" r="1.3" fill="url(#gs)"/><circle cx="203.7" cy="189.0" r="1.3" fill="url(#gs)"/><circle cx="150.1" cy="183.0" r="1.3" fill="url(#gs)"/><circle cx="174.6" cy="220.3" r="1.3" fill="url(#gs)"/><circle cx="235.2" cy="229.9" r="1.3" fill="url(#gs)"/><circle cx="246.9" cy="196.9" r="1.3" fill="url(#gs)"/><circle cx="229.9" cy="170.3" r="1.3" fill="url(#gs)"/><circle cx="202.3" cy="233.0" r="1.3" fill="url(#gs)"/><circle cx="181.0" cy="184.1" r="1.3" fill="url(#gs)"/><circle cx="210.8" cy="176.7" r="1.3" fill="url(#gs)"/><circle cx="265.2" cy="202.2" r="1.3" fill="url(#gs)"/><circle cx="285.0" cy="233.5" r="1.3" fill="url(#gs)"/><circle cx="333.9" cy="228.8" r="1.3" fill="url(#gs)"/><circle cx="279.7" cy="207.1" r="1.3" fill="url(#gs)"/><circle cx="333.9" cy="198.0" r="1.3" fill="url(#gs)"/><circle cx="345.6" cy="167.1" r="1.3" fill="url(#gs)"/><circle cx="307.3" cy="183.0" r="1.3" fill="url(#gs)"/><circle cx="324.3" cy="174.5" r="1.3" fill="url(#gs)"/><circle cx="255.2" cy="165.0" r="1.3" fill="url(#gs)"/><circle cx="314.8" cy="207.5" r="1.3" fill="url(#gs)"/><circle cx="449.6" cy="179.9" r="1.3" fill="url(#gs)"/><circle cx="426.2" cy="187.3" r="1.3" fill="url(#gs)"/><circle cx="448.6" cy="204.7" r="1.3" fill="url(#gs)"/><circle cx="375.1" cy="175.6" r="1.3" fill="url(#gs)"/><circle cx="417.7" cy="163.5" r="1.3" fill="url(#gs)"/><circle cx="393.2" cy="211.8" r="1.3" fill="url(#gs)"/><circle cx="359.2" cy="188.4" r="1.3" fill="url(#gs)"/><circle cx="385.8" cy="228.8" r="1.3" fill="url(#gs)"/><circle cx="445.4" cy="226.7" r="1.3" fill="url(#gs)"/><circle cx="412.4" cy="199.0" r="1.3" fill="url(#gs)"/><circle cx="459.0" cy="201.0" r="1.3" fill="url(#gs)"/><circle cx="98.8" cy="302.9" r="1.3" fill="url(#gs)"/><circle cx="111.7" cy="303.4" r="1.3" fill="url(#gs)"/><circle cx="78.4" cy="307.7" r="1.3" fill="url(#gs)"/><circle cx="91.3" cy="308.7" r="1.3" fill="url(#gs)"/><circle cx="105.3" cy="274.3" r="1.3" fill="url(#gs)"/><circle cx="59.0" cy="290.5" r="1.3" fill="url(#gs)"/><circle cx="88.1" cy="260.4" r="1.3" fill="url(#gs)"/><circle cx="53.7" cy="256.0" r="1.3" fill="url(#gs)"/><circle cx="101.0" cy="266.8" r="1.3" fill="url(#gs)"/><circle cx="127.9" cy="274.3" r="1.3" fill="url(#gs)"/><circle cx="87.0" cy="288.3" r="1.3" fill="url(#gs)"/><circle cx="93.5" cy="315.2" r="1.3" fill="url(#gs)"/><circle cx="80.6" cy="324.9" r="1.3" fill="url(#gs)"/><circle cx="124.6" cy="246.4" r="1.3" fill="url(#gs)"/><circle cx="149.1" cy="296.9" r="1.3" fill="url(#gs)"/><circle cx="171.7" cy="292.6" r="1.3" fill="url(#gs)"/><circle cx="178.1" cy="292.6" r="1.3" fill="url(#gs)"/><circle cx="209.9" cy="249.2" r="1.3" fill="url(#gs)"/><circle cx="218.5" cy="280.8" r="1.3" fill="url(#gs)"/><circle cx="228.6" cy="288.7" r="1.3" fill="url(#gs)"/><circle cx="199.6" cy="295.8" r="1.3" fill="url(#gs)"/><circle cx="192.1" cy="297.3" r="1.3" fill="url(#gs)"/><circle cx="169.5" cy="300.1" r="1.3" fill="url(#gs)"/><circle cx="198.5" cy="255.0" r="1.3" fill="url(#gs)"/><circle cx="246.9" cy="278.6" r="1.3" fill="url(#gs)"/><circle cx="244.8" cy="266.8" r="1.3" fill="url(#gs)"/><circle cx="230.8" cy="248.5" r="1.3" fill="url(#gs)"/><circle cx="173.8" cy="266.8" r="1.3" fill="url(#gs)"/><circle cx="260.6" cy="315.2" r="1.3" fill="url(#gs)"/><circle cx="266.0" cy="304.9" r="1.3" fill="url(#gs)"/><circle cx="283.2" cy="251.8" r="1.3" fill="url(#gs)"/><circle cx="324.0" cy="317.3" r="1.3" fill="url(#gs)"/><circle cx="346.6" cy="261.4" r="1.3" fill="url(#gs)"/><circle cx="353.1" cy="250.7" r="1.3" fill="url(#gs)"/><circle cx="333.7" cy="265.7" r="1.3" fill="url(#gs)"/><circle cx="314.4" cy="294.8" r="1.3" fill="url(#gs)"/><circle cx="292.9" cy="309.8" r="1.3" fill="url(#gs)"/><circle cx="256.3" cy="304.4" r="1.3" fill="url(#gs)"/><circle cx="402.2" cy="285.0" r="1.3" fill="url(#gs)"/><circle cx="451.6" cy="286.5" r="1.3" fill="url(#gs)"/><circle cx="413.0" cy="295.1" r="1.3" fill="url(#gs)"/><circle cx="436.5" cy="301.5" r="1.3" fill="url(#gs)"/><circle cx="389.9" cy="306.5" r="1.3" fill="url(#gs)"/><circle cx="444.0" cy="275.4" r="1.3" fill="url(#gs)"/><circle cx="447.3" cy="272.2" r="1.3" fill="url(#gs)"/><circle cx="419.4" cy="251.7" r="1.3" fill="url(#gs)"/><circle cx="412.0" cy="265.0" r="1.3" fill="url(#gs)"/><circle cx="460.0" cy="327.0" r="1.3" fill="url(#gs)"/><circle cx="412.0" cy="244.9" r="1.3" fill="url(#gs)"/><circle cx="142.1" cy="130.2" r="6" fill="url(#gstar)"/><circle cx="353.4" cy="280.1" r="6.5" fill="url(#gstar2)"/><rect x="114" y="56.6" width="1.2" height="1.2" fill="#e0e0e0"/><path d="M546.8 130.4 L552.2 135.6 L549.6 135.8 L551 138 L550 138.5 L548.7 136.2 L546.8 137.8 Z" fill="#f2f2f2" stroke="#111" stroke-width="0.5"/><rect x="3.8" y="424" width="63" height="7.2" rx="0.6" fill="url(#gcombo)" stroke="#a8a8a8" stroke-width="0.6"/><rect x="7" y="425" width="5" height="5" fill="#2030f0"/><rect x="8" y="426.5" width="3" height="1.8" fill="#8090ff"/><line x1="60.5" y1="424.5" x2="60.5" y2="430.8" stroke="#cfcfcf" stroke-width="0.5"/><path d="M61.8 426.6 h3 l-1.5 1.8 Z" fill="#111"/><rect x="68.6" y="423.6" width="7" height="7.6" fill="#f4f4f4" stroke="#d0d0d0" stroke-width="0.5"/><path d="M69.8 424.6 h2.8 l2 2 v3.6 h-4.8 Z" fill="#3040f0"/><path d="M72.6 424.6 v2 h2" fill="#a0b0ff"/><rect x="82.6" y="423.7" width="7.8" height="7.9" rx="0.6" fill="url(#gsb)"/><rect x="92" y="423.7" width="7.9" height="7.9" rx="0.6" fill="url(#gsg)"/><rect x="101.7" y="423.7" width="7.9" height="7.9" rx="0.6" fill="url(#gsg)"/><rect x="111.2" y="423.7" width="7.9" height="7.9" rx="0.6" fill="url(#gsg)"/><line x1="121.5" y1="422.5" x2="121.5" y2="432.5" stroke="#d0d0d0" stroke-width="0.6"/><line x1="194" y1="423" x2="194" y2="432.5" stroke="#d4d4d4" stroke-width="0.6"/><path d="M323.8 425.8 L327 427.6 L323.8 429.4 Z" fill="#2a7ae8"/><line x1="332.5" y1="423" x2="332.5" y2="432" stroke="#d6d6d6" stroke-width="0.6"/><line x1="799" y1="421.5" x2="799" y2="433" stroke="#cfcfcf" stroke-width="0.6"/></svg><div class="tx" style="left:121px;top:23.7px;font-size:4.9px;color:#222">Gray</div><div class="tx" style="left:15.5px;top:426px;font-size:4.8px;color:#555">L</div><div class="tx" style="left:337.5px;top:425.6px;font-size:5.4px;color:#2a2a2a">w:4003 · h:2666 · n:1 · f32 · Grayscale(global) · 40.710 MB</div></body></html>
